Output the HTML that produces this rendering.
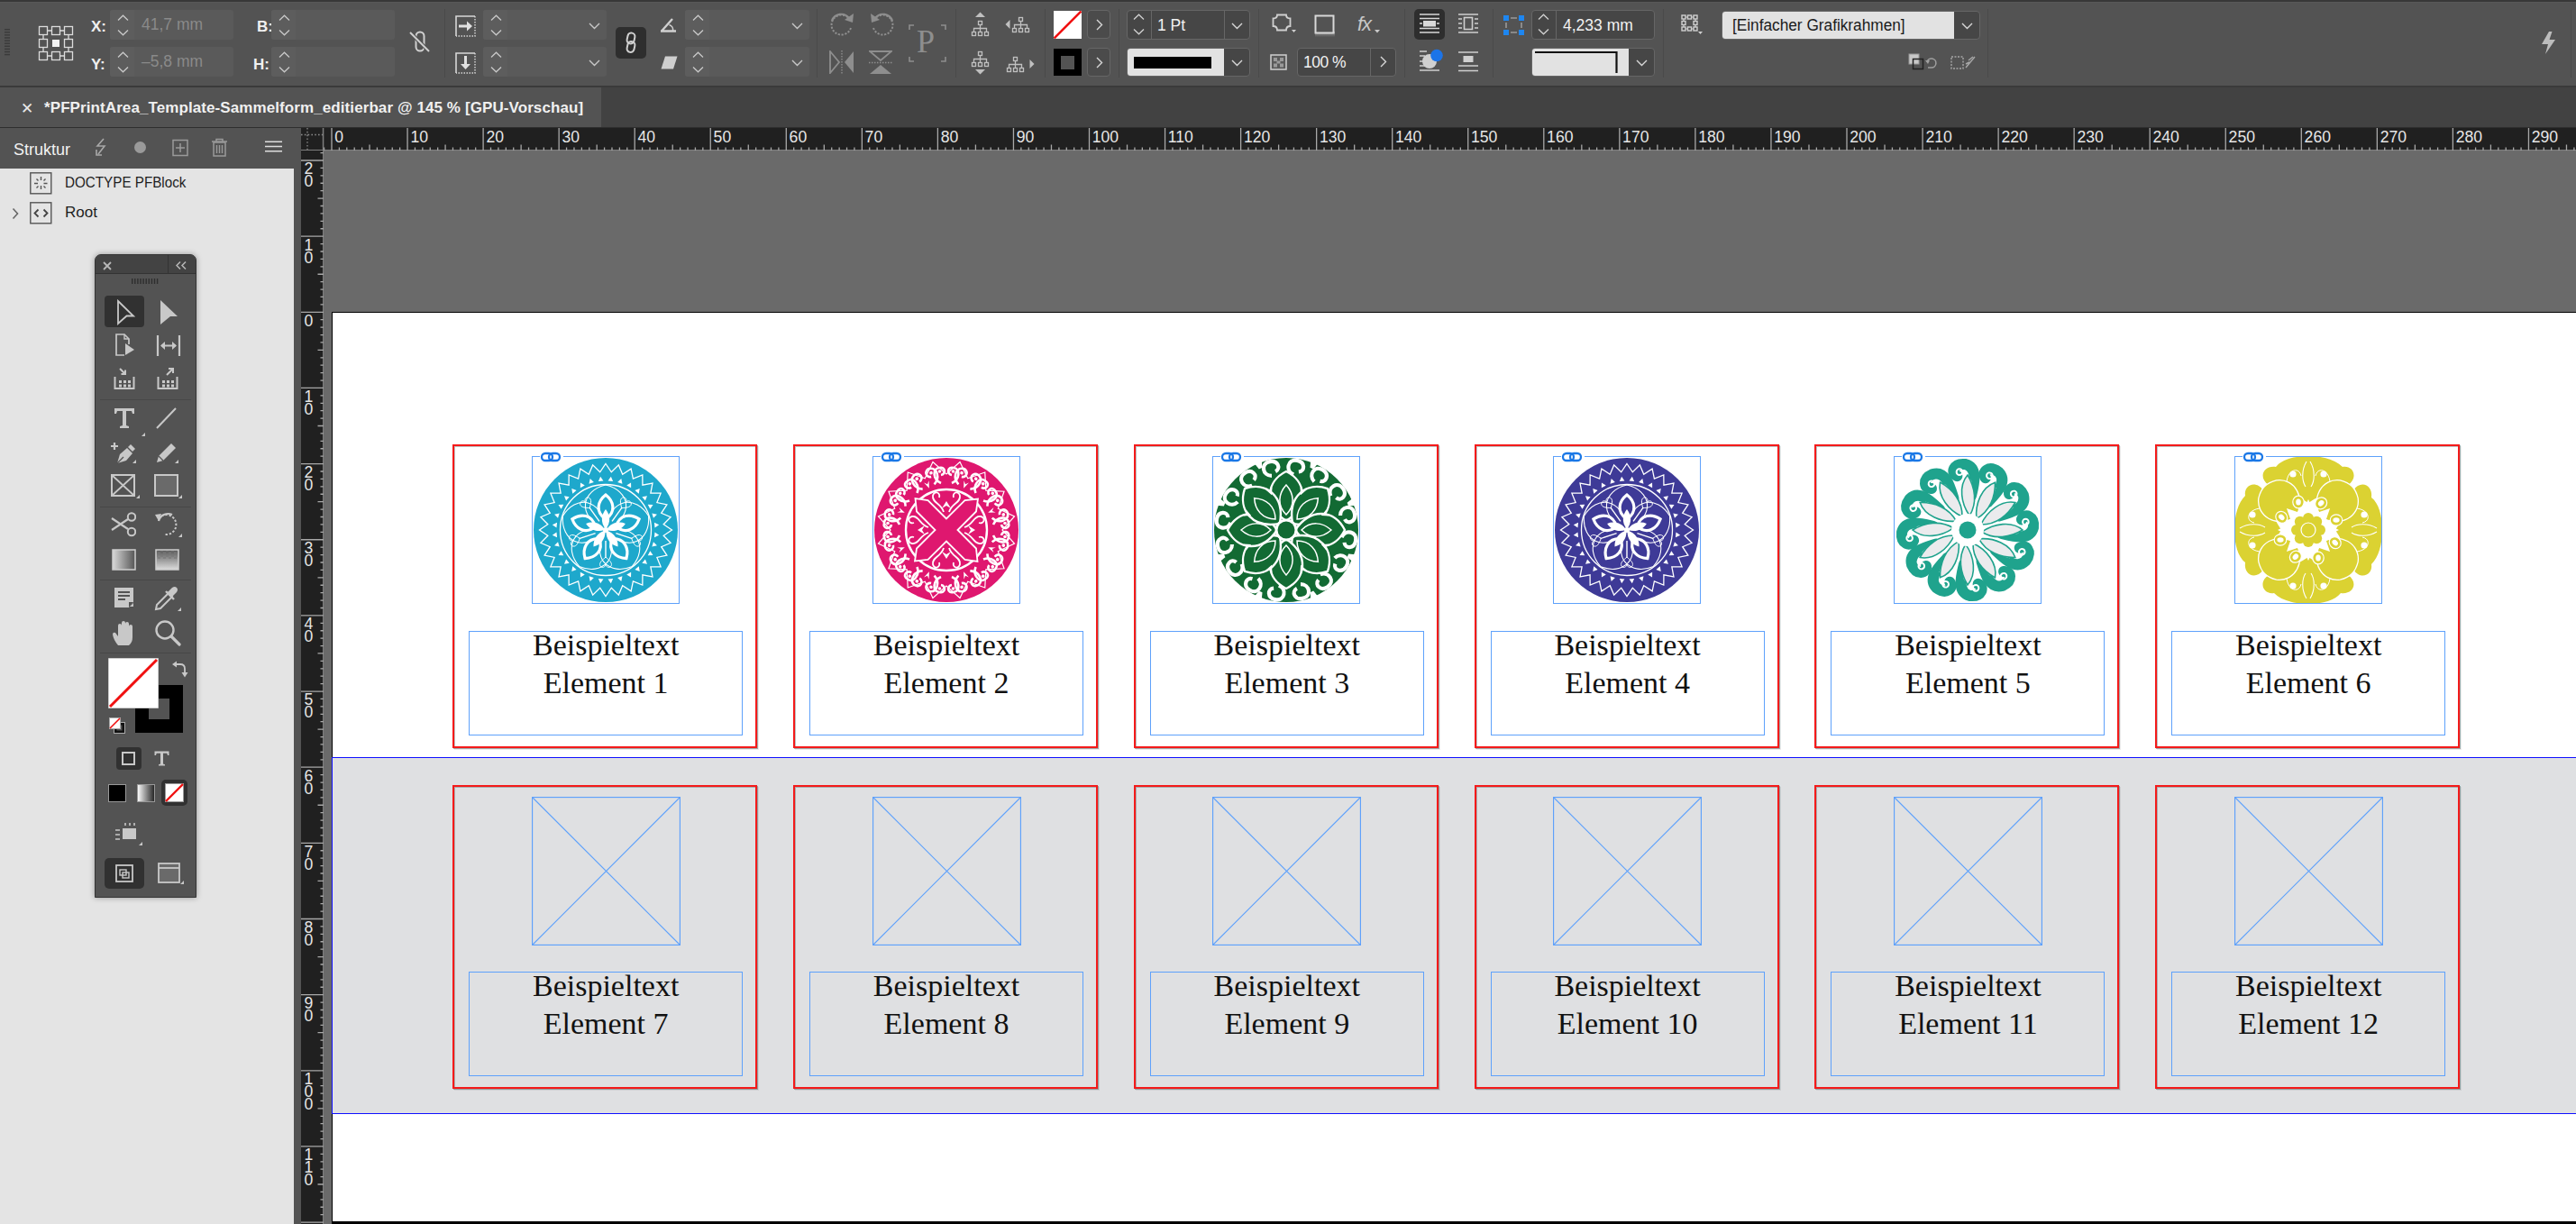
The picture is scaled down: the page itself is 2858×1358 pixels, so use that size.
<!DOCTYPE html><html><head><meta charset="utf-8"><style>
*{margin:0;padding:0;box-sizing:border-box}
html,body{width:2858px;height:1358px;overflow:hidden;background:#535353;font-family:"Liberation Sans",sans-serif}
.a{position:absolute}
.t{position:absolute;white-space:nowrap;line-height:1}
</style></head><body>

<div class="a" style="left:0;top:0;width:2858px;height:2px;background:#383838"></div>
<div class="a" style="left:0;top:2px;width:2858px;height:1px;background:#585858"></div>
<div class="a" style="left:0;top:95px;width:2858px;height:2px;background:#3a3a3a"></div>
<svg class="a" style="left:5px;top:32px" width="7" height="32" viewBox="0 0 7 32"><rect x="0" y="0.0" width="6" height="1.4" fill="#3a3a3a"/><rect x="0" y="3.1" width="6" height="1.4" fill="#3a3a3a"/><rect x="0" y="6.2" width="6" height="1.4" fill="#3a3a3a"/><rect x="0" y="9.3" width="6" height="1.4" fill="#3a3a3a"/><rect x="0" y="12.4" width="6" height="1.4" fill="#3a3a3a"/><rect x="0" y="15.5" width="6" height="1.4" fill="#3a3a3a"/><rect x="0" y="18.6" width="6" height="1.4" fill="#3a3a3a"/><rect x="0" y="21.7" width="6" height="1.4" fill="#3a3a3a"/><rect x="0" y="24.8" width="6" height="1.4" fill="#3a3a3a"/><rect x="0" y="27.9" width="6" height="1.4" fill="#3a3a3a"/></svg>
<svg class="a" style="left:42px;top:28px" width="41" height="41" viewBox="0 0 41 41"><rect x="1.5" y="1.5" width="9" height="9" fill="none" stroke="#dcdcdc" stroke-width="1.3"/><rect x="15.5" y="1.5" width="9" height="9" fill="none" stroke="#dcdcdc" stroke-width="1.3"/><rect x="29.5" y="1.5" width="9" height="9" fill="none" stroke="#dcdcdc" stroke-width="1.3"/><rect x="1.5" y="15.5" width="9" height="9" fill="none" stroke="#dcdcdc" stroke-width="1.3"/><rect x="16" y="16" width="8" height="8" fill="#f2f2f2"/><rect x="29.5" y="15.5" width="9" height="9" fill="none" stroke="#dcdcdc" stroke-width="1.3"/><rect x="1.5" y="29.5" width="9" height="9" fill="none" stroke="#dcdcdc" stroke-width="1.3"/><rect x="15.5" y="29.5" width="9" height="9" fill="none" stroke="#dcdcdc" stroke-width="1.3"/><rect x="29.5" y="29.5" width="9" height="9" fill="none" stroke="#dcdcdc" stroke-width="1.3"/><path d="M11 6 H15 M25 6 H29 M11 34 H15 M25 34 H29 M6 11 V15 M6 25 V29 M34 11 V15 M34 25 V29" stroke="#dcdcdc" stroke-width="1.3"/></svg>
<div class="t" style="left:101px;top:21px;font-size:17px;font-weight:bold;color:#f0f0f0">X:</div>
<div class="t" style="left:101px;top:63px;font-size:17px;font-weight:bold;color:#f0f0f0">Y:</div>
<div class="t" style="left:285px;top:21px;font-size:17px;font-weight:bold;color:#f0f0f0">B:</div>
<div class="t" style="left:281px;top:63px;font-size:17px;font-weight:bold;color:#f0f0f0">H:</div>
<div class="a" style="left:122px;top:11px;width:137px;height:33px;background:#5a5a5a;border-radius:3px"></div>
<div class="a" style="left:122px;top:11px;width:27px;height:33px;background:#5d5d5d;border-radius:3px 0 0 3px"></div>
<svg class="a" style="left:129.5px;top:15.5px" width="13" height="25" viewBox="0 0 13 25"><path d="M1 6.5 L6.5 1.2 L12 6.5 M1 17.5 L6.5 22.8 L12 17.5" fill="none" stroke="#c8c8c8" stroke-width="1.3"/></svg>
<div class="t" style="left:157px;top:19.4px;font-size:17.5px;color:#8a8a8a">41,7 mm</div>
<div class="a" style="left:122px;top:52px;width:137px;height:33px;background:#5a5a5a;border-radius:3px"></div>
<div class="a" style="left:122px;top:52px;width:27px;height:33px;background:#5d5d5d;border-radius:3px 0 0 3px"></div>
<svg class="a" style="left:129.5px;top:56.5px" width="13" height="25" viewBox="0 0 13 25"><path d="M1 6.5 L6.5 1.2 L12 6.5 M1 17.5 L6.5 22.8 L12 17.5" fill="none" stroke="#c8c8c8" stroke-width="1.3"/></svg>
<div class="t" style="left:157px;top:60.4px;font-size:17.5px;color:#8a8a8a">&#8211;5,8 mm</div>
<div class="a" style="left:301px;top:11px;width:137px;height:33px;background:#5a5a5a;border-radius:3px"></div>
<div class="a" style="left:301px;top:11px;width:27px;height:33px;background:#5d5d5d;border-radius:3px 0 0 3px"></div>
<svg class="a" style="left:308.5px;top:15.5px" width="13" height="25" viewBox="0 0 13 25"><path d="M1 6.5 L6.5 1.2 L12 6.5 M1 17.5 L6.5 22.8 L12 17.5" fill="none" stroke="#c8c8c8" stroke-width="1.3"/></svg>
<div class="a" style="left:301px;top:52px;width:137px;height:33px;background:#5a5a5a;border-radius:3px"></div>
<div class="a" style="left:301px;top:52px;width:27px;height:33px;background:#5d5d5d;border-radius:3px 0 0 3px"></div>
<svg class="a" style="left:308.5px;top:56.5px" width="13" height="25" viewBox="0 0 13 25"><path d="M1 6.5 L6.5 1.2 L12 6.5 M1 17.5 L6.5 22.8 L12 17.5" fill="none" stroke="#c8c8c8" stroke-width="1.3"/></svg>
<svg class="a" style="left:453px;top:33px" width="26" height="26" viewBox="0 0 26 26"><rect x="8.5" y="2.5" width="9" height="21" rx="4.5" fill="none" stroke="#d0d0d0" stroke-width="2"/><path d="M2 3 L23 24" stroke="#535353" stroke-width="4"/><path d="M2 3 L23 24" stroke="#d0d0d0" stroke-width="2"/></svg>
<div class="a" style="left:493px;top:10px;width:1px;height:76px;background:#4a4a4a"></div>
<svg class="a" style="left:505px;top:17px" width="24" height="24" viewBox="0 0 24 24"><path d="M1 23 V1 H22" fill="none" stroke="#d8d8d8" stroke-width="1.6"/><path d="M22 1 V23 H1" fill="none" stroke="#d8d8d8" stroke-width="1.4" stroke-dasharray="1.5 1.5"/><path d="M4 12 H15" stroke="#e0e0e0" stroke-width="3"/><path d="M13 6.5 L19 12 L13 17.5 Z" fill="#e0e0e0"/></svg>
<svg class="a" style="left:505px;top:58px" width="24" height="24" viewBox="0 0 24 24"><path d="M1 23 V1 H22" fill="none" stroke="#d8d8d8" stroke-width="1.6"/><path d="M22 1 V23 H1" fill="none" stroke="#d8d8d8" stroke-width="1.4" stroke-dasharray="1.5 1.5"/><path d="M11.5 4 V15" stroke="#e0e0e0" stroke-width="3"/><path d="M6 13 L11.5 19 L17 13 Z" fill="#e0e0e0"/></svg>
<div class="a" style="left:536px;top:11px;width:137px;height:33px;background:#5a5a5a;border-radius:3px"></div>
<div class="a" style="left:536px;top:11px;width:27px;height:33px;background:#5d5d5d;border-radius:3px 0 0 3px"></div>
<svg class="a" style="left:543.5px;top:15.5px" width="13" height="25" viewBox="0 0 13 25"><path d="M1 6.5 L6.5 1.2 L12 6.5 M1 17.5 L6.5 22.8 L12 17.5" fill="none" stroke="#c8c8c8" stroke-width="1.3"/></svg>
<svg class="a" style="left:653px;top:24.5px" width="13" height="8" viewBox="0 0 13 8"><path d="M1 1 L6.5 6.5 L12 1" fill="none" stroke="#c8c8c8" stroke-width="1.4"/></svg>
<div class="a" style="left:536px;top:52px;width:137px;height:33px;background:#5a5a5a;border-radius:3px"></div>
<div class="a" style="left:536px;top:52px;width:27px;height:33px;background:#5d5d5d;border-radius:3px 0 0 3px"></div>
<svg class="a" style="left:543.5px;top:56.5px" width="13" height="25" viewBox="0 0 13 25"><path d="M1 6.5 L6.5 1.2 L12 6.5 M1 17.5 L6.5 22.8 L12 17.5" fill="none" stroke="#c8c8c8" stroke-width="1.3"/></svg>
<svg class="a" style="left:653px;top:65.5px" width="13" height="8" viewBox="0 0 13 8"><path d="M1 1 L6.5 6.5 L12 1" fill="none" stroke="#c8c8c8" stroke-width="1.4"/></svg>
<div class="a" style="left:683px;top:30px;width:34px;height:35px;background:#2e2e2e;border-radius:5px"></div>
<svg class="a" style="left:691px;top:35px" width="18" height="25" viewBox="0 0 18 25"><rect x="5" y="1.5" width="8" height="12" rx="4" fill="none" stroke="#d0d0d0" stroke-width="2" transform="rotate(12 9 7.5)"/><rect x="5" y="11" width="8" height="12" rx="4" fill="none" stroke="#d0d0d0" stroke-width="2" transform="rotate(12 9 17)"/></svg>
<svg class="a" style="left:732px;top:19px" width="20" height="17" viewBox="0 0 20 17"><path d="M2 15.5 L14 2 M1 15.5 H18" stroke="#d0d0d0" stroke-width="2.4" fill="none"/><path d="M10.5 8.5 a6 6 0 0 1 4 7" stroke="#d0d0d0" stroke-width="1.6" fill="none"/></svg>
<svg class="a" style="left:733px;top:62px" width="19" height="15" viewBox="0 0 19 15"><path d="M5 0.5 H18.5 L14 14.5 H0.5 Z" fill="#cfcfcf"/></svg>
<div class="a" style="left:760px;top:11px;width:138px;height:33px;background:#5a5a5a;border-radius:3px"></div>
<div class="a" style="left:760px;top:11px;width:27px;height:33px;background:#5d5d5d;border-radius:3px 0 0 3px"></div>
<svg class="a" style="left:767.5px;top:15.5px" width="13" height="25" viewBox="0 0 13 25"><path d="M1 6.5 L6.5 1.2 L12 6.5 M1 17.5 L6.5 22.8 L12 17.5" fill="none" stroke="#c8c8c8" stroke-width="1.3"/></svg>
<svg class="a" style="left:878px;top:24.5px" width="13" height="8" viewBox="0 0 13 8"><path d="M1 1 L6.5 6.5 L12 1" fill="none" stroke="#c8c8c8" stroke-width="1.4"/></svg>
<div class="a" style="left:760px;top:52px;width:138px;height:33px;background:#5a5a5a;border-radius:3px"></div>
<div class="a" style="left:760px;top:52px;width:27px;height:33px;background:#5d5d5d;border-radius:3px 0 0 3px"></div>
<svg class="a" style="left:767.5px;top:56.5px" width="13" height="25" viewBox="0 0 13 25"><path d="M1 6.5 L6.5 1.2 L12 6.5 M1 17.5 L6.5 22.8 L12 17.5" fill="none" stroke="#c8c8c8" stroke-width="1.3"/></svg>
<svg class="a" style="left:878px;top:65.5px" width="13" height="8" viewBox="0 0 13 8"><path d="M1 1 L6.5 6.5 L12 1" fill="none" stroke="#c8c8c8" stroke-width="1.4"/></svg>
<div class="a" style="left:906px;top:10px;width:1px;height:76px;background:#4a4a4a"></div>
<svg class="a" style="left:920px;top:13px" width="29" height="28" viewBox="0 0 29 28"><path d="M23 9 A11 11 0 1 0 24 18" fill="none" stroke="#8e8e8e" stroke-width="2" stroke-dasharray="2.2 1.6"/><path d="M3 10 A11 11 0 0 1 22 7" fill="none" stroke="#8e8e8e" stroke-width="2.2"/><path d="M17 9 L27 2 L26 12 Z" fill="#8e8e8e"/></svg>
<svg class="a" style="left:964px;top:13px" width="29" height="28" viewBox="0 0 29 28" style="transform:scaleX(-1)"><g transform="translate(29 0) scale(-1 1)"><path d="M23 9 A11 11 0 1 0 24 18" fill="none" stroke="#8e8e8e" stroke-width="2" stroke-dasharray="2.2 1.6"/><path d="M3 10 A11 11 0 0 1 22 7" fill="none" stroke="#8e8e8e" stroke-width="2.2"/><path d="M17 9 L27 2 L26 12 Z" fill="#8e8e8e"/></g></svg>
<svg class="a" style="left:920px;top:56px" width="28" height="26" viewBox="0 0 28 26"><path d="M1 1 L11 13 L1 25 Z" fill="none" stroke="#8e8e8e" stroke-width="1.8"/><path d="M27 1 L17 13 L27 25 Z" fill="#8e8e8e"/><path d="M14 0 V26" stroke="#8e8e8e" stroke-width="1.4" stroke-dasharray="1.5 1.5"/></svg>
<svg class="a" style="left:964px;top:56px" width="26" height="27" viewBox="0 0 26 27"><path d="M1 1 H25 L13 11 Z" fill="none" stroke="#8e8e8e" stroke-width="1.8"/><path d="M1 26 H25 L13 16 Z" fill="#8e8e8e"/><path d="M0 13.5 H26" stroke="#8e8e8e" stroke-width="1.4" stroke-dasharray="1.5 1.5"/></svg>
<svg class="a" style="left:1008px;top:27px" width="42" height="42" viewBox="0 0 42 42"><path d="M1 6 V1 H6 M36 1 H41 V6 M41 36 V41 H36 M6 41 H1 V36" fill="none" stroke="#8e8e8e" stroke-width="1.6"/></svg>
<div class="t" style="left:1017px;top:28px;font-family:'Liberation Serif',serif;font-size:36px;color:#8e8e8e">P</div>
<div class="a" style="left:1060px;top:10px;width:1px;height:76px;background:#4a4a4a"></div>
<svg class="a" style="left:1077px;top:13px" width="32" height="28" viewBox="0 0 32 28"><g fill="none" stroke="#c0c0c0" stroke-width="1.3"><rect x="8.5" y="10.5" width="4" height="4"/><rect x="1.5" y="22.5" width="4" height="4"/><rect x="8.5" y="22.5" width="4" height="4"/><rect x="15.5" y="22.5" width="4" height="4"/><path d="M10.5 14.5 V18.5 M3.5 22.5 V18.5 H17.5 V22.5 M10.5 18.5 V22.5"/></g><path d="M5 6 L10.5 0.5 L16 6 Z" fill="#c0c0c0"/></svg>
<svg class="a" style="left:1115px;top:14px" width="32" height="28" viewBox="0 0 32 28"><g fill="none" stroke="#c0c0c0" stroke-width="1.3"><rect x="15.5" y="5.5" width="4" height="4"/><rect x="8.5" y="17.5" width="4" height="4"/><rect x="15.5" y="17.5" width="4" height="4"/><rect x="22.5" y="17.5" width="4" height="4"/><path d="M17.5 9.5 V13.5 M10.5 17.5 V13.5 H24.5 V17.5 M17.5 13.5 V17.5"/></g><path d="M5.5 8 L0.5 13 L5.5 18 Z" fill="#c0c0c0"/></svg>
<svg class="a" style="left:1077px;top:56px" width="32" height="28" viewBox="0 0 32 28"><g fill="none" stroke="#c0c0c0" stroke-width="1.3"><rect x="8.5" y="1.5" width="4" height="4"/><rect x="1.5" y="13.5" width="4" height="4"/><rect x="8.5" y="13.5" width="4" height="4"/><rect x="15.5" y="13.5" width="4" height="4"/><path d="M10.5 5.5 V9.5 M3.5 13.5 V9.5 H17.5 V13.5 M10.5 9.5 V13.5"/></g><path d="M5 21 L10.5 26.5 L16 21 Z" fill="#c0c0c0"/></svg>
<svg class="a" style="left:1116px;top:58px" width="32" height="28" viewBox="0 0 32 28"><g fill="none" stroke="#c0c0c0" stroke-width="1.3"><rect x="8.5" y="5.5" width="4" height="4"/><rect x="1.5" y="17.5" width="4" height="4"/><rect x="8.5" y="17.5" width="4" height="4"/><rect x="15.5" y="17.5" width="4" height="4"/><path d="M10.5 9.5 V13.5 M3.5 17.5 V13.5 H17.5 V17.5 M10.5 13.5 V17.5"/></g><path d="M26.5 8 L31.5 13 L26.5 18 Z" fill="#c0c0c0"/></svg>
<div class="a" style="left:1159px;top:10px;width:1px;height:76px;background:#4a4a4a"></div>
<svg class="a" style="left:1169px;top:12px" width="31" height="31" viewBox="0 0 31 31"><rect x="0" y="0" width="31" height="31" fill="#fff"/><path d="M0.5 30.5 L30.5 0.5" stroke="#f01010" stroke-width="2.6"/></svg>
<div class="a" style="left:1206px;top:11px;width:26px;height:32px;background:#4b4b4b;border:1px solid #666;border-radius:4px"></div>
<svg class="a" style="left:1216px;top:21px" width="8" height="13" viewBox="0 0 8 13"><path d="M1 1 L6.5 6.5 L1 12" fill="none" stroke="#d8d8d8" stroke-width="1.4"/></svg>
<div class="a" style="left:1169px;top:54px;width:31px;height:30px;background:#000"></div>
<div class="a" style="left:1177px;top:62px;width:15px;height:15px;background:#535353"></div>
<div class="a" style="left:1206px;top:53px;width:26px;height:32px;background:#4b4b4b;border:1px solid #666;border-radius:4px"></div>
<svg class="a" style="left:1216px;top:63px" width="8" height="13" viewBox="0 0 8 13"><path d="M1 1 L6.5 6.5 L1 12" fill="none" stroke="#d8d8d8" stroke-width="1.4"/></svg>
<div class="a" style="left:1241px;top:10px;width:1px;height:76px;background:#4a4a4a"></div>
<div class="a" style="left:1250px;top:11px;width:137px;height:33px;background:#464646;border:1px solid #666;border-radius:4px"></div>
<div class="a" style="left:1277px;top:12px;width:1px;height:31px;background:#666"></div>
<div class="a" style="left:1358px;top:12px;width:1px;height:31px;background:#666"></div>
<svg class="a" style="left:1257px;top:15px" width="13" height="25" viewBox="0 0 13 25"><path d="M1 6.5 L6.5 1.2 L12 6.5 M1 17.5 L6.5 22.8 L12 17.5" fill="none" stroke="#d0d0d0" stroke-width="1.3"/></svg>
<div class="t" style="left:1284px;top:19.5px;font-size:17.5px;color:#f2f2f2">1 Pt</div>
<svg class="a" style="left:1366px;top:25px" width="13" height="8" viewBox="0 0 13 8"><path d="M1 1 L6.5 6.5 L12 1" fill="none" stroke="#d8d8d8" stroke-width="1.4"/></svg>
<div class="a" style="left:1250px;top:53px;width:137px;height:32px;background:#464646;border:1px solid #666;border-radius:4px"></div>
<div class="a" style="left:1251px;top:54px;width:107px;height:30px;background:#e2e2e2;border-radius:3px 0 0 3px"></div>
<div class="a" style="left:1258px;top:63px;width:86px;height:13px;background:#000"></div>
<svg class="a" style="left:1366px;top:66px" width="13" height="8" viewBox="0 0 13 8"><path d="M1 1 L6.5 6.5 L12 1" fill="none" stroke="#d8d8d8" stroke-width="1.4"/></svg>
<div class="a" style="left:1396px;top:10px;width:1px;height:76px;background:#4a4a4a"></div>
<svg class="a" style="left:1411px;top:15px" width="28" height="23" viewBox="0 0 28 23"><path d="M6 1.5 H16 Q16 5.5 20.5 5.5 V14 Q16 14 16 18.5 H6 Q6 14 1.5 14 V5.5 Q6 5.5 6 1.5 Z" fill="none" stroke="#d0d0d0" stroke-width="1.8"/><path d="M22 18 H27 L24.5 21 Z" fill="#d0d0d0"/></svg>
<svg class="a" style="left:1458px;top:16px" width="24" height="26" viewBox="0 0 24 26"><defs><linearGradient id="sh" x1="0" y1="0" x2="0" y2="1"><stop offset="0" stop-color="#9a9a9a"/><stop offset="1" stop-color="#555"/></linearGradient></defs><rect x="1" y="19" width="22" height="6" fill="url(#sh)"/><rect x="1.5" y="1.5" width="20" height="19" fill="#535353" stroke="#d8d8d8" stroke-width="2"/></svg>
<div class="t" style="left:1506px;top:16px;font-size:22px;font-style:italic;color:#c8c8c8;letter-spacing:-1px">fx</div>
<svg class="a" style="left:1525px;top:33px" width="6" height="4" viewBox="0 0 6 4"><path d="M0 0 H6 L3 3.5 Z" fill="#c8c8c8"/></svg>
<svg class="a" style="left:1409px;top:60px" width="19" height="18" viewBox="0 0 19 18"><rect x="1" y="1" width="17" height="16" fill="#5a5a5a" stroke="#cfcfcf" stroke-width="1.5"/><rect x="4" y="4" width="4" height="4" fill="#9a9a9a"/><rect x="11" y="4" width="4" height="4" fill="#9a9a9a"/><rect x="7.5" y="7.5" width="4" height="3" fill="#9a9a9a"/><rect x="4" y="10.5" width="4" height="4" fill="#9a9a9a"/><rect x="11" y="10.5" width="4" height="4" fill="#9a9a9a"/></svg>
<div class="a" style="left:1439px;top:53px;width:110px;height:32px;background:#464646;border:1px solid #666;border-radius:4px"></div>
<div class="a" style="left:1520px;top:54px;width:1px;height:30px;background:#666"></div>
<div class="t" style="left:1446px;top:60.5px;font-size:17.5px;color:#f2f2f2;letter-spacing:-0.5px">100 %</div>
<svg class="a" style="left:1531px;top:62px" width="8" height="13" viewBox="0 0 8 13"><path d="M1 1 L6.5 6.5 L1 12" fill="none" stroke="#d8d8d8" stroke-width="1.4"/></svg>
<div class="a" style="left:1558px;top:10px;width:1px;height:76px;background:#4a4a4a"></div>
<div class="a" style="left:1569px;top:10px;width:34px;height:34px;background:#2e2e2e;border-radius:5px"></div>
<svg class="a" style="left:1574px;top:15px" width="24" height="22" viewBox="0 0 24 22"><path d="M1 1 H23 M1 5.5 H23 M1 16.5 H23 M1 21 H23" stroke="#d8d8d8" stroke-width="1.5"/><rect x="5" y="8" width="14" height="6.5" fill="#d8d8d8"/><path d="M1 11 H4 M20 11 H23" stroke="#d8d8d8" stroke-width="1.5"/></svg>
<svg class="a" style="left:1617px;top:15px" width="24" height="22" viewBox="0 0 24 22"><path d="M1 1 H23 M1 21 H23 M1 6 H5 M1 11 H5 M1 16 H5 M19 6 H23 M19 11 H23 M19 16 H23" stroke="#d0d0d0" stroke-width="1.5"/><rect x="7.5" y="4.5" width="9" height="13" fill="none" stroke="#d0d0d0" stroke-width="1.6"/></svg>
<svg class="a" style="left:1574px;top:54px" width="30" height="26" viewBox="0 0 30 26"><path d="M1 3 H9 M1 8 H7 M1 14 H7 M1 19 H9 M1 24 H23" stroke="#d0d0d0" stroke-width="1.5"/><circle cx="12" cy="14" r="8" fill="#d0d0d0"/><circle cx="20" cy="7.5" r="6.8" fill="#1c74e8"/></svg>
<svg class="a" style="left:1617px;top:57px" width="24" height="23" viewBox="0 0 24 23"><path d="M1 1 H23 M1 16 H23 M1 21.5 H23" stroke="#d0d0d0" stroke-width="1.5"/><rect x="6.5" y="5" width="11" height="7" fill="#d0d0d0"/></svg>
<div class="a" style="left:1656px;top:10px;width:1px;height:76px;background:#4a4a4a"></div>
<svg class="a" style="left:1667px;top:16px" width="25" height="24" viewBox="0 0 25 24"><rect x="1" y="1" width="6" height="6" fill="#1e86f0"/><rect x="18" y="1" width="6" height="6" fill="#1e86f0"/><rect x="1" y="17" width="6" height="6" fill="#1e86f0"/><rect x="18" y="17" width="6" height="6" fill="#1e86f0"/><path d="M9 4 H16 M9 20 H16 M4 9 V15 M21 9 V15" stroke="#9a9a9a" stroke-width="1.6"/></svg>
<div class="a" style="left:1699px;top:11px;width:137px;height:33px;background:#464646;border:1px solid #666;border-radius:4px"></div>
<div class="a" style="left:1726px;top:12px;width:1px;height:31px;background:#666"></div>
<svg class="a" style="left:1706px;top:15px" width="13" height="25" viewBox="0 0 13 25"><path d="M1 6.5 L6.5 1.2 L12 6.5 M1 17.5 L6.5 22.8 L12 17.5" fill="none" stroke="#d0d0d0" stroke-width="1.3"/></svg>
<div class="t" style="left:1734px;top:19.5px;font-size:17.5px;color:#f2f2f2">4,233 mm</div>
<div class="a" style="left:1699px;top:53px;width:137px;height:32px;background:#464646;border:1px solid #666;border-radius:4px"></div>
<div class="a" style="left:1700px;top:54px;width:107px;height:30px;background:#e2e2e2;border-radius:3px 0 0 3px"></div>
<svg class="a" style="left:1702px;top:56px" width="94" height="26" viewBox="0 0 94 26"><path d="M1 2 H91.5 V25" fill="none" stroke="#111" stroke-width="2.2"/></svg>
<svg class="a" style="left:1815px;top:66px" width="13" height="8" viewBox="0 0 13 8"><path d="M1 1 L6.5 6.5 L12 1" fill="none" stroke="#d8d8d8" stroke-width="1.4"/></svg>
<div class="a" style="left:1845px;top:10px;width:1px;height:76px;background:#4a4a4a"></div>
<svg class="a" style="left:1865px;top:16px" width="26" height="23" viewBox="0 0 26 23"><g fill="none" stroke="#d0d0d0" stroke-width="1.4"><rect x="1" y="1" width="4" height="4"/><rect x="7.5" y="1" width="4" height="4"/><rect x="14" y="1" width="4" height="4"/><rect x="1" y="7.5" width="4" height="4"/><rect x="14" y="7.5" width="4" height="4"/><rect x="1" y="14" width="4" height="4"/><rect x="7.5" y="14" width="4" height="4"/><rect x="14" y="14" width="4" height="4"/></g><path d="M5 3 H7.5 M11.5 3 H14 M5 16 H7.5 M11.5 16 H14 M3 5 V7.5 M3 11.5 V14 M16 5 V7.5 M16 11.5 V14" stroke="#d0d0d0" stroke-width="1.2"/><path d="M19 19 H24 L21.5 22 Z" fill="#d0d0d0"/></svg>
<div class="a" style="left:1910px;top:12px;width:287px;height:32px;background:#464646;border:1px solid #666;border-radius:4px"></div>
<div class="a" style="left:1911px;top:13px;width:257px;height:30px;background:#e2e2e2;border-radius:3px 0 0 3px"></div>
<div class="t" style="left:1922px;top:20px;font-size:17.5px;color:#1a1a1a;transform:scaleX(0.985);transform-origin:left">[Einfacher Grafikrahmen]</div>
<svg class="a" style="left:2176px;top:25px" width="13" height="8" viewBox="0 0 13 8"><path d="M1 1 L6.5 6.5 L12 1" fill="none" stroke="#d8d8d8" stroke-width="1.4"/></svg>
<svg class="a" style="left:2117px;top:59px" width="33" height="20" viewBox="0 0 33 20"><rect x="1" y="1" width="11" height="11" fill="#c8c8c8" stroke="#9a9a9a"/><rect x="5.5" y="6.5" width="11" height="11" fill="none" stroke="#222" stroke-width="1.5"/><path d="M21 10 a5 5 0 1 1 5 6 H22" fill="none" stroke="#a0a0a0" stroke-width="1.5"/><path d="M19 8 L22 12 L24 8 Z" fill="#a0a0a0"/></svg>
<svg class="a" style="left:2164px;top:59px" width="29" height="20" viewBox="0 0 29 20"><rect x="1" y="4" width="13" height="13" fill="none" stroke="#a8a8a8" stroke-width="1.4" stroke-dasharray="2 1.5"/><path d="M17 16 L27 4 M20 8 L25 4 M17 12 L21 10" stroke="#a8a8a8" stroke-width="1.4"/></svg>
<div class="a" style="left:2205px;top:10px;width:1px;height:76px;background:#4a4a4a"></div>
<svg class="a" style="left:2819px;top:35px" width="18" height="26" viewBox="0 0 18 26"><path d="M9 0 L1 14 H8 L5 25 L16 9 H9.5 L12.5 0 Z" fill="#bdbdbd"/></svg>
<div class="a" style="left:2852px;top:11px;width:1px;height:75px;background:#4a4a4a"></div>
<div class="a" style="left:0;top:97px;width:2858px;height:44px;background:#424242"></div>
<div class="a" style="left:0;top:97px;width:667px;height:44px;background:#535353"></div>
<div class="a" style="left:0;top:141px;width:2858px;height:1px;background:#2e2e2e"></div>
<div class="t" style="left:23px;top:112px;font-size:17px;color:#e8e8e8">&#x2715;</div>
<div class="t" style="left:49px;top:111px;font-size:17px;font-weight:bold;color:#f0f0f0;letter-spacing:0.09px">*PFPrintArea_Template-Sammelform_editierbar @ 145 % [GPU-Vorschau]</div>
<div class="a" style="left:0;top:142px;width:334px;height:1216px;background:#535353"></div>
<div class="a" style="left:0;top:187px;width:326px;height:1171px;background:#e4e4e4"></div>
<div class="t" style="left:15px;top:156.5px;font-size:18px;color:#f2f2f2">Struktur</div>
<div class="t" style="left:72px;top:194px;font-size:17px;color:#1e1e1e;transform:scaleX(0.895);transform-origin:left">DOCTYPE PFBlock</div>
<div class="t" style="left:72px;top:226.5px;font-size:17px;color:#1e1e1e">Root</div>
<svg class="a" style="left:334px;top:142px" width="2524" height="27" viewBox="0 0 2524 27"><rect x="0" y="0" width="2524" height="25" fill="#202020"/><rect x="0" y="24" width="2524" height="1.6" fill="#7e7e7e"/><path d="M25.60 21.5 V25 M34.00 0 V25 M42.40 21.5 V25 M50.81 21.5 V25 M59.21 21.5 V25 M67.62 21.5 V25 M76.02 18.5 V25 M84.43 21.5 V25 M92.83 21.5 V25 M101.24 21.5 V25 M109.64 21.5 V25 M118.05 0 V25 M126.45 21.5 V25 M134.86 21.5 V25 M143.26 21.5 V25 M151.67 21.5 V25 M160.07 18.5 V25 M168.48 21.5 V25 M176.88 21.5 V25 M185.29 21.5 V25 M193.69 21.5 V25 M202.10 0 V25 M210.50 21.5 V25 M218.91 21.5 V25 M227.32 21.5 V25 M235.72 21.5 V25 M244.12 18.5 V25 M252.53 21.5 V25 M260.93 21.5 V25 M269.34 21.5 V25 M277.75 21.5 V25 M286.15 0 V25 M294.56 21.5 V25 M302.96 21.5 V25 M311.37 21.5 V25 M319.77 21.5 V25 M328.17 18.5 V25 M336.58 21.5 V25 M344.98 21.5 V25 M353.39 21.5 V25 M361.79 21.5 V25 M370.20 0 V25 M378.61 21.5 V25 M387.01 21.5 V25 M395.41 21.5 V25 M403.82 21.5 V25 M412.22 18.5 V25 M420.63 21.5 V25 M429.03 21.5 V25 M437.44 21.5 V25 M445.85 21.5 V25 M454.25 0 V25 M462.65 21.5 V25 M471.06 21.5 V25 M479.46 21.5 V25 M487.87 21.5 V25 M496.27 18.5 V25 M504.68 21.5 V25 M513.09 21.5 V25 M521.49 21.5 V25 M529.89 21.5 V25 M538.30 0 V25 M546.70 21.5 V25 M555.11 21.5 V25 M563.51 21.5 V25 M571.92 21.5 V25 M580.32 18.5 V25 M588.73 21.5 V25 M597.13 21.5 V25 M605.54 21.5 V25 M613.94 21.5 V25 M622.35 0 V25 M630.75 21.5 V25 M639.16 21.5 V25 M647.56 21.5 V25 M655.97 21.5 V25 M664.38 18.5 V25 M672.78 21.5 V25 M681.18 21.5 V25 M689.59 21.5 V25 M697.99 21.5 V25 M706.40 0 V25 M714.80 21.5 V25 M723.21 21.5 V25 M731.61 21.5 V25 M740.02 21.5 V25 M748.42 18.5 V25 M756.83 21.5 V25 M765.23 21.5 V25 M773.64 21.5 V25 M782.05 21.5 V25 M790.45 0 V25 M798.86 21.5 V25 M807.26 21.5 V25 M815.66 21.5 V25 M824.07 21.5 V25 M832.47 18.5 V25 M840.88 21.5 V25 M849.28 21.5 V25 M857.69 21.5 V25 M866.09 21.5 V25 M874.50 0 V25 M882.90 21.5 V25 M891.31 21.5 V25 M899.71 21.5 V25 M908.12 21.5 V25 M916.53 18.5 V25 M924.93 21.5 V25 M933.34 21.5 V25 M941.74 21.5 V25 M950.14 21.5 V25 M958.55 0 V25 M966.95 21.5 V25 M975.36 21.5 V25 M983.76 21.5 V25 M992.17 21.5 V25 M1000.57 18.5 V25 M1008.98 21.5 V25 M1017.38 21.5 V25 M1025.79 21.5 V25 M1034.19 21.5 V25 M1042.60 0 V25 M1051.00 21.5 V25 M1059.41 21.5 V25 M1067.81 21.5 V25 M1076.22 21.5 V25 M1084.62 18.5 V25 M1093.03 21.5 V25 M1101.43 21.5 V25 M1109.84 21.5 V25 M1118.24 21.5 V25 M1126.65 0 V25 M1135.05 21.5 V25 M1143.46 21.5 V25 M1151.87 21.5 V25 M1160.27 21.5 V25 M1168.67 18.5 V25 M1177.08 21.5 V25 M1185.48 21.5 V25 M1193.89 21.5 V25 M1202.29 21.5 V25 M1210.70 0 V25 M1219.11 21.5 V25 M1227.51 21.5 V25 M1235.91 21.5 V25 M1244.32 21.5 V25 M1252.72 18.5 V25 M1261.13 21.5 V25 M1269.53 21.5 V25 M1277.94 21.5 V25 M1286.34 21.5 V25 M1294.75 0 V25 M1303.15 21.5 V25 M1311.56 21.5 V25 M1319.96 21.5 V25 M1328.37 21.5 V25 M1336.77 18.5 V25 M1345.18 21.5 V25 M1353.58 21.5 V25 M1361.99 21.5 V25 M1370.39 21.5 V25 M1378.80 0 V25 M1387.20 21.5 V25 M1395.61 21.5 V25 M1404.01 21.5 V25 M1412.42 21.5 V25 M1420.82 18.5 V25 M1429.23 21.5 V25 M1437.63 21.5 V25 M1446.04 21.5 V25 M1454.44 21.5 V25 M1462.85 0 V25 M1471.25 21.5 V25 M1479.66 21.5 V25 M1488.06 21.5 V25 M1496.47 21.5 V25 M1504.88 18.5 V25 M1513.28 21.5 V25 M1521.68 21.5 V25 M1530.09 21.5 V25 M1538.49 21.5 V25 M1546.90 0 V25 M1555.30 21.5 V25 M1563.71 21.5 V25 M1572.11 21.5 V25 M1580.52 21.5 V25 M1588.92 18.5 V25 M1597.33 21.5 V25 M1605.73 21.5 V25 M1614.14 21.5 V25 M1622.54 21.5 V25 M1630.95 0 V25 M1639.35 21.5 V25 M1647.76 21.5 V25 M1656.16 21.5 V25 M1664.57 21.5 V25 M1672.97 18.5 V25 M1681.38 21.5 V25 M1689.78 21.5 V25 M1698.19 21.5 V25 M1706.59 21.5 V25 M1715.00 0 V25 M1723.40 21.5 V25 M1731.81 21.5 V25 M1740.22 21.5 V25 M1748.62 21.5 V25 M1757.02 18.5 V25 M1765.43 21.5 V25 M1773.84 21.5 V25 M1782.24 21.5 V25 M1790.64 21.5 V25 M1799.05 0 V25 M1807.45 21.5 V25 M1815.86 21.5 V25 M1824.26 21.5 V25 M1832.67 21.5 V25 M1841.07 18.5 V25 M1849.48 21.5 V25 M1857.88 21.5 V25 M1866.29 21.5 V25 M1874.69 21.5 V25 M1883.10 0 V25 M1891.51 21.5 V25 M1899.91 21.5 V25 M1908.31 21.5 V25 M1916.72 21.5 V25 M1925.12 18.5 V25 M1933.53 21.5 V25 M1941.93 21.5 V25 M1950.34 21.5 V25 M1958.74 21.5 V25 M1967.15 0 V25 M1975.55 21.5 V25 M1983.96 21.5 V25 M1992.36 21.5 V25 M2000.77 21.5 V25 M2009.18 18.5 V25 M2017.58 21.5 V25 M2025.98 21.5 V25 M2034.39 21.5 V25 M2042.80 21.5 V25 M2051.20 0 V25 M2059.60 21.5 V25 M2068.01 21.5 V25 M2076.41 21.5 V25 M2084.82 21.5 V25 M2093.22 18.5 V25 M2101.63 21.5 V25 M2110.03 21.5 V25 M2118.44 21.5 V25 M2126.84 21.5 V25 M2135.25 0 V25 M2143.65 21.5 V25 M2152.06 21.5 V25 M2160.46 21.5 V25 M2168.87 21.5 V25 M2177.27 18.5 V25 M2185.68 21.5 V25 M2194.09 21.5 V25 M2202.49 21.5 V25 M2210.89 21.5 V25 M2219.30 0 V25 M2227.70 21.5 V25 M2236.11 21.5 V25 M2244.51 21.5 V25 M2252.92 21.5 V25 M2261.32 18.5 V25 M2269.73 21.5 V25 M2278.13 21.5 V25 M2286.54 21.5 V25 M2294.94 21.5 V25 M2303.35 0 V25 M2311.75 21.5 V25 M2320.16 21.5 V25 M2328.56 21.5 V25 M2336.97 21.5 V25 M2345.38 18.5 V25 M2353.78 21.5 V25 M2362.18 21.5 V25 M2370.59 21.5 V25 M2378.99 21.5 V25 M2387.40 0 V25 M2395.80 21.5 V25 M2404.21 21.5 V25 M2412.61 21.5 V25 M2421.02 21.5 V25 M2429.42 18.5 V25 M2437.83 21.5 V25 M2446.23 21.5 V25 M2454.64 21.5 V25 M2463.04 21.5 V25 M2471.45 0 V25 M2479.86 21.5 V25 M2488.26 21.5 V25 M2496.66 21.5 V25 M2505.07 21.5 V25 M2513.47 18.5 V25 M2521.88 21.5 V25" stroke="#a8a8a8" stroke-width="1.3"/><text x="37.3" y="16.4" font-family="Liberation Sans" font-size="17.6" fill="#e6e6e6">0</text><text x="121.4" y="16.4" font-family="Liberation Sans" font-size="17.6" fill="#e6e6e6">10</text><text x="205.4" y="16.4" font-family="Liberation Sans" font-size="17.6" fill="#e6e6e6">20</text><text x="289.4" y="16.4" font-family="Liberation Sans" font-size="17.6" fill="#e6e6e6">30</text><text x="373.5" y="16.4" font-family="Liberation Sans" font-size="17.6" fill="#e6e6e6">40</text><text x="457.6" y="16.4" font-family="Liberation Sans" font-size="17.6" fill="#e6e6e6">50</text><text x="541.6" y="16.4" font-family="Liberation Sans" font-size="17.6" fill="#e6e6e6">60</text><text x="625.6" y="16.4" font-family="Liberation Sans" font-size="17.6" fill="#e6e6e6">70</text><text x="709.7" y="16.4" font-family="Liberation Sans" font-size="17.6" fill="#e6e6e6">80</text><text x="793.7" y="16.4" font-family="Liberation Sans" font-size="17.6" fill="#e6e6e6">90</text><text x="877.8" y="16.4" font-family="Liberation Sans" font-size="17.6" fill="#e6e6e6">100</text><text x="961.8" y="16.4" font-family="Liberation Sans" font-size="17.6" fill="#e6e6e6">110</text><text x="1045.9" y="16.4" font-family="Liberation Sans" font-size="17.6" fill="#e6e6e6">120</text><text x="1129.9" y="16.4" font-family="Liberation Sans" font-size="17.6" fill="#e6e6e6">130</text><text x="1214.0" y="16.4" font-family="Liberation Sans" font-size="17.6" fill="#e6e6e6">140</text><text x="1298.0" y="16.4" font-family="Liberation Sans" font-size="17.6" fill="#e6e6e6">150</text><text x="1382.1" y="16.4" font-family="Liberation Sans" font-size="17.6" fill="#e6e6e6">160</text><text x="1466.1" y="16.4" font-family="Liberation Sans" font-size="17.6" fill="#e6e6e6">170</text><text x="1550.2" y="16.4" font-family="Liberation Sans" font-size="17.6" fill="#e6e6e6">180</text><text x="1634.2" y="16.4" font-family="Liberation Sans" font-size="17.6" fill="#e6e6e6">190</text><text x="1718.3" y="16.4" font-family="Liberation Sans" font-size="17.6" fill="#e6e6e6">200</text><text x="1802.4" y="16.4" font-family="Liberation Sans" font-size="17.6" fill="#e6e6e6">210</text><text x="1886.4" y="16.4" font-family="Liberation Sans" font-size="17.6" fill="#e6e6e6">220</text><text x="1970.4" y="16.4" font-family="Liberation Sans" font-size="17.6" fill="#e6e6e6">230</text><text x="2054.5" y="16.4" font-family="Liberation Sans" font-size="17.6" fill="#e6e6e6">240</text><text x="2138.6" y="16.4" font-family="Liberation Sans" font-size="17.6" fill="#e6e6e6">250</text><text x="2222.6" y="16.4" font-family="Liberation Sans" font-size="17.6" fill="#e6e6e6">260</text><text x="2306.7" y="16.4" font-family="Liberation Sans" font-size="17.6" fill="#e6e6e6">270</text><text x="2390.7" y="16.4" font-family="Liberation Sans" font-size="17.6" fill="#e6e6e6">280</text><text x="2474.8" y="16.4" font-family="Liberation Sans" font-size="17.6" fill="#e6e6e6">290</text><path d="M7 0 V24 M0 7.5 H24" stroke="#8a8a8a" stroke-width="1.3" stroke-dasharray="1.6 2.2"/><rect x="23.8" y="0" width="1.5" height="25" fill="#7e7e7e"/></svg>
<svg class="a" style="left:334px;top:167px" width="26" height="1191" viewBox="0 0 26 1191"><rect x="0" y="0" width="24" height="1191" fill="#202020"/><rect x="24" y="0" width="1.6" height="1191" fill="#7e7e7e"/><path d="M21.5 2.59 H25 M0 11.00 H25 M21.5 19.42 H25 M21.5 27.83 H25 M21.5 36.25 H25 M21.5 44.66 H25 M18.5 53.08 H25 M21.5 61.49 H25 M21.5 69.91 H25 M21.5 78.32 H25 M21.5 86.74 H25 M0 95.15 H25 M21.5 103.57 H25 M21.5 111.98 H25 M21.5 120.40 H25 M21.5 128.81 H25 M18.5 137.23 H25 M21.5 145.64 H25 M21.5 154.06 H25 M21.5 162.47 H25 M21.5 170.88 H25 M0 179.30 H25 M21.5 187.72 H25 M21.5 196.13 H25 M21.5 204.55 H25 M21.5 212.96 H25 M18.5 221.38 H25 M21.5 229.79 H25 M21.5 238.20 H25 M21.5 246.62 H25 M21.5 255.03 H25 M0 263.45 H25 M21.5 271.87 H25 M21.5 280.28 H25 M21.5 288.69 H25 M21.5 297.11 H25 M18.5 305.52 H25 M21.5 313.94 H25 M21.5 322.36 H25 M21.5 330.77 H25 M21.5 339.19 H25 M0 347.60 H25 M21.5 356.01 H25 M21.5 364.43 H25 M21.5 372.85 H25 M21.5 381.26 H25 M18.5 389.67 H25 M21.5 398.09 H25 M21.5 406.50 H25 M21.5 414.92 H25 M21.5 423.34 H25 M0 431.75 H25 M21.5 440.16 H25 M21.5 448.58 H25 M21.5 457.00 H25 M21.5 465.41 H25 M18.5 473.83 H25 M21.5 482.24 H25 M21.5 490.65 H25 M21.5 499.07 H25 M21.5 507.48 H25 M0 515.90 H25 M21.5 524.32 H25 M21.5 532.73 H25 M21.5 541.14 H25 M21.5 549.56 H25 M18.5 557.97 H25 M21.5 566.39 H25 M21.5 574.80 H25 M21.5 583.22 H25 M21.5 591.63 H25 M0 600.05 H25 M21.5 608.46 H25 M21.5 616.88 H25 M21.5 625.29 H25 M21.5 633.71 H25 M18.5 642.12 H25 M21.5 650.54 H25 M21.5 658.95 H25 M21.5 667.37 H25 M21.5 675.78 H25 M0 684.20 H25 M21.5 692.62 H25 M21.5 701.03 H25 M21.5 709.44 H25 M21.5 717.86 H25 M18.5 726.27 H25 M21.5 734.69 H25 M21.5 743.11 H25 M21.5 751.52 H25 M21.5 759.93 H25 M0 768.35 H25 M21.5 776.76 H25 M21.5 785.18 H25 M21.5 793.60 H25 M21.5 802.01 H25 M18.5 810.42 H25 M21.5 818.84 H25 M21.5 827.25 H25 M21.5 835.67 H25 M21.5 844.09 H25 M0 852.50 H25 M21.5 860.91 H25 M21.5 869.33 H25 M21.5 877.74 H25 M21.5 886.16 H25 M18.5 894.58 H25 M21.5 902.99 H25 M21.5 911.40 H25 M21.5 919.82 H25 M21.5 928.23 H25 M0 936.65 H25 M21.5 945.06 H25 M21.5 953.48 H25 M21.5 961.89 H25 M21.5 970.31 H25 M18.5 978.72 H25 M21.5 987.14 H25 M21.5 995.55 H25 M21.5 1003.97 H25 M21.5 1012.38 H25 M0 1020.80 H25 M21.5 1029.21 H25 M21.5 1037.63 H25 M21.5 1046.04 H25 M21.5 1054.46 H25 M18.5 1062.88 H25 M21.5 1071.29 H25 M21.5 1079.70 H25 M21.5 1088.12 H25 M21.5 1096.53 H25 M0 1104.95 H25 M21.5 1113.37 H25 M21.5 1121.78 H25 M21.5 1130.19 H25 M21.5 1138.61 H25 M18.5 1147.02 H25 M21.5 1155.44 H25 M21.5 1163.86 H25 M21.5 1172.27 H25 M21.5 1180.68 H25 M0 1189.10 H25" stroke="#a8a8a8" stroke-width="1.3"/><text x="3.4" y="26.3" font-family="Liberation Sans" font-size="17.6" fill="#e6e6e6">2</text><text x="3.4" y="40.3" font-family="Liberation Sans" font-size="17.6" fill="#e6e6e6">0</text><text x="3.4" y="110.5" font-family="Liberation Sans" font-size="17.6" fill="#e6e6e6">1</text><text x="3.4" y="124.5" font-family="Liberation Sans" font-size="17.6" fill="#e6e6e6">0</text><text x="3.4" y="194.6" font-family="Liberation Sans" font-size="17.6" fill="#e6e6e6">0</text><text x="3.4" y="278.8" font-family="Liberation Sans" font-size="17.6" fill="#e6e6e6">1</text><text x="3.4" y="292.8" font-family="Liberation Sans" font-size="17.6" fill="#e6e6e6">0</text><text x="3.4" y="362.9" font-family="Liberation Sans" font-size="17.6" fill="#e6e6e6">2</text><text x="3.4" y="376.9" font-family="Liberation Sans" font-size="17.6" fill="#e6e6e6">0</text><text x="3.4" y="447.1" font-family="Liberation Sans" font-size="17.6" fill="#e6e6e6">3</text><text x="3.4" y="461.1" font-family="Liberation Sans" font-size="17.6" fill="#e6e6e6">0</text><text x="3.4" y="531.2" font-family="Liberation Sans" font-size="17.6" fill="#e6e6e6">4</text><text x="3.4" y="545.2" font-family="Liberation Sans" font-size="17.6" fill="#e6e6e6">0</text><text x="3.4" y="615.3" font-family="Liberation Sans" font-size="17.6" fill="#e6e6e6">5</text><text x="3.4" y="629.3" font-family="Liberation Sans" font-size="17.6" fill="#e6e6e6">0</text><text x="3.4" y="699.5" font-family="Liberation Sans" font-size="17.6" fill="#e6e6e6">6</text><text x="3.4" y="713.5" font-family="Liberation Sans" font-size="17.6" fill="#e6e6e6">0</text><text x="3.4" y="783.6" font-family="Liberation Sans" font-size="17.6" fill="#e6e6e6">7</text><text x="3.4" y="797.6" font-family="Liberation Sans" font-size="17.6" fill="#e6e6e6">0</text><text x="3.4" y="867.8" font-family="Liberation Sans" font-size="17.6" fill="#e6e6e6">8</text><text x="3.4" y="881.8" font-family="Liberation Sans" font-size="17.6" fill="#e6e6e6">0</text><text x="3.4" y="951.9" font-family="Liberation Sans" font-size="17.6" fill="#e6e6e6">9</text><text x="3.4" y="965.9" font-family="Liberation Sans" font-size="17.6" fill="#e6e6e6">0</text><text x="3.4" y="1036.1" font-family="Liberation Sans" font-size="17.6" fill="#e6e6e6">1</text><text x="3.4" y="1050.1" font-family="Liberation Sans" font-size="17.6" fill="#e6e6e6">0</text><text x="3.4" y="1064.1" font-family="Liberation Sans" font-size="17.6" fill="#e6e6e6">0</text><text x="3.4" y="1120.2" font-family="Liberation Sans" font-size="17.6" fill="#e6e6e6">1</text><text x="3.4" y="1134.2" font-family="Liberation Sans" font-size="17.6" fill="#e6e6e6">1</text><text x="3.4" y="1148.2" font-family="Liberation Sans" font-size="17.6" fill="#e6e6e6">0</text><text x="3.4" y="1204.4" font-family="Liberation Sans" font-size="17.6" fill="#e6e6e6">1</text><text x="3.4" y="1218.4" font-family="Liberation Sans" font-size="17.6" fill="#e6e6e6">2</text><text x="3.4" y="1232.4" font-family="Liberation Sans" font-size="17.6" fill="#e6e6e6">0</text></svg>
<div class="a" style="left:359px;top:168px;width:2499px;height:1190px;background:#6a6a6a"></div>
<div class="a" style="left:368px;top:346px;width:2490px;height:1009px;background:#fff;border-left:1px solid #000;border-top:1px solid #000"></div>
<div class="a" style="left:368px;top:1355px;width:2490px;height:3px;background:#000"></div>
<div class="a" style="left:369px;top:841px;width:2489px;height:394px;background:#dfe0e2"></div>
<div class="a" style="left:369px;top:840px;width:2489px;height:1px;background:#1010ff"></div>
<div class="a" style="left:368px;top:840px;width:1px;height:396px;background:#1010ff"></div>
<div class="a" style="left:369px;top:1235px;width:2489px;height:1px;background:#1010ff"></div>
<div class="a" style="left:502.2px;top:493px;width:338px;height:337px;border:2px solid #f41a1a;box-shadow:1px 1px 0 rgba(90,100,100,.5), 2px 2px 0 rgba(120,120,120,.15), inset 1px 1px 0 rgba(90,100,100,.4)"></div>
<svg class="a" style="left:589.8px;top:506px" width="164" height="164" viewBox="0 0 164 164"><circle cx="82.0" cy="82.0" r="80" fill="#1ea8cc"/><polygon points="82.00,8.50 88.32,17.81 96.34,9.91 100.72,20.28 110.13,14.09 112.41,25.12 122.83,20.89 122.92,32.14 133.97,30.03 131.86,41.08 143.11,41.17 138.88,51.59 149.91,53.87 143.72,63.28 154.09,67.66 146.19,75.68 155.50,82.00 146.19,88.32 154.09,96.34 143.72,100.72 149.91,110.13 138.88,112.41 143.11,122.83 131.86,122.92 133.97,133.97 122.92,131.86 122.83,143.11 112.41,138.88 110.13,149.91 100.72,143.72 96.34,154.09 88.32,146.19 82.00,155.50 75.68,146.19 67.66,154.09 63.28,143.72 53.87,149.91 51.59,138.88 41.17,143.11 41.08,131.86 30.03,133.97 32.14,122.92 20.89,122.83 25.12,112.41 14.09,110.13 20.28,100.72 9.91,96.34 17.81,88.32 8.50,82.00 17.81,75.68 9.91,67.66 20.28,63.28 14.09,53.87 25.12,51.59 20.89,41.17 32.14,41.08 30.03,30.03 41.08,32.14 41.17,20.89 51.59,25.12 53.87,14.09 63.28,20.28 67.66,9.91 75.68,17.81" fill="none" stroke="#fff" stroke-width="1.3" stroke-linejoin="miter"/><g transform="rotate(5.625 82.0 82.0)"><path d="M82.0 22.5 L79.2 27.5 L84.8 27.5 Z" fill="#fff"/></g><g transform="rotate(16.875 82.0 82.0)"><path d="M82.0 22.5 L79.2 27.5 L84.8 27.5 Z" fill="#fff"/></g><g transform="rotate(28.125 82.0 82.0)"><path d="M82.0 22.5 L79.2 27.5 L84.8 27.5 Z" fill="#fff"/></g><g transform="rotate(39.375 82.0 82.0)"><path d="M82.0 22.5 L79.2 27.5 L84.8 27.5 Z" fill="#fff"/></g><g transform="rotate(50.625 82.0 82.0)"><path d="M82.0 22.5 L79.2 27.5 L84.8 27.5 Z" fill="#fff"/></g><g transform="rotate(61.875 82.0 82.0)"><path d="M82.0 22.5 L79.2 27.5 L84.8 27.5 Z" fill="#fff"/></g><g transform="rotate(73.125 82.0 82.0)"><path d="M82.0 22.5 L79.2 27.5 L84.8 27.5 Z" fill="#fff"/></g><g transform="rotate(84.375 82.0 82.0)"><path d="M82.0 22.5 L79.2 27.5 L84.8 27.5 Z" fill="#fff"/></g><g transform="rotate(95.625 82.0 82.0)"><path d="M82.0 22.5 L79.2 27.5 L84.8 27.5 Z" fill="#fff"/></g><g transform="rotate(106.875 82.0 82.0)"><path d="M82.0 22.5 L79.2 27.5 L84.8 27.5 Z" fill="#fff"/></g><g transform="rotate(118.125 82.0 82.0)"><path d="M82.0 22.5 L79.2 27.5 L84.8 27.5 Z" fill="#fff"/></g><g transform="rotate(129.375 82.0 82.0)"><path d="M82.0 22.5 L79.2 27.5 L84.8 27.5 Z" fill="#fff"/></g><g transform="rotate(140.625 82.0 82.0)"><path d="M82.0 22.5 L79.2 27.5 L84.8 27.5 Z" fill="#fff"/></g><g transform="rotate(151.875 82.0 82.0)"><path d="M82.0 22.5 L79.2 27.5 L84.8 27.5 Z" fill="#fff"/></g><g transform="rotate(163.125 82.0 82.0)"><path d="M82.0 22.5 L79.2 27.5 L84.8 27.5 Z" fill="#fff"/></g><g transform="rotate(174.375 82.0 82.0)"><path d="M82.0 22.5 L79.2 27.5 L84.8 27.5 Z" fill="#fff"/></g><g transform="rotate(185.625 82.0 82.0)"><path d="M82.0 22.5 L79.2 27.5 L84.8 27.5 Z" fill="#fff"/></g><g transform="rotate(196.875 82.0 82.0)"><path d="M82.0 22.5 L79.2 27.5 L84.8 27.5 Z" fill="#fff"/></g><g transform="rotate(208.125 82.0 82.0)"><path d="M82.0 22.5 L79.2 27.5 L84.8 27.5 Z" fill="#fff"/></g><g transform="rotate(219.375 82.0 82.0)"><path d="M82.0 22.5 L79.2 27.5 L84.8 27.5 Z" fill="#fff"/></g><g transform="rotate(230.625 82.0 82.0)"><path d="M82.0 22.5 L79.2 27.5 L84.8 27.5 Z" fill="#fff"/></g><g transform="rotate(241.875 82.0 82.0)"><path d="M82.0 22.5 L79.2 27.5 L84.8 27.5 Z" fill="#fff"/></g><g transform="rotate(253.125 82.0 82.0)"><path d="M82.0 22.5 L79.2 27.5 L84.8 27.5 Z" fill="#fff"/></g><g transform="rotate(264.375 82.0 82.0)"><path d="M82.0 22.5 L79.2 27.5 L84.8 27.5 Z" fill="#fff"/></g><g transform="rotate(275.625 82.0 82.0)"><path d="M82.0 22.5 L79.2 27.5 L84.8 27.5 Z" fill="#fff"/></g><g transform="rotate(286.875 82.0 82.0)"><path d="M82.0 22.5 L79.2 27.5 L84.8 27.5 Z" fill="#fff"/></g><g transform="rotate(298.125 82.0 82.0)"><path d="M82.0 22.5 L79.2 27.5 L84.8 27.5 Z" fill="#fff"/></g><g transform="rotate(309.375 82.0 82.0)"><path d="M82.0 22.5 L79.2 27.5 L84.8 27.5 Z" fill="#fff"/></g><g transform="rotate(320.625 82.0 82.0)"><path d="M82.0 22.5 L79.2 27.5 L84.8 27.5 Z" fill="#fff"/></g><g transform="rotate(331.875 82.0 82.0)"><path d="M82.0 22.5 L79.2 27.5 L84.8 27.5 Z" fill="#fff"/></g><g transform="rotate(343.125 82.0 82.0)"><path d="M82.0 22.5 L79.2 27.5 L84.8 27.5 Z" fill="#fff"/></g><g transform="rotate(354.375 82.0 82.0)"><path d="M82.0 22.5 L79.2 27.5 L84.8 27.5 Z" fill="#fff"/></g><circle cx="82.0" cy="82.0" r="50.5" fill="none" stroke="#fff" stroke-width="1.3"/><g transform="rotate(0.000 82.0 82.0)"><path d="M82.0 82.0 C48.0 66.0 56.0 38.0 82.0 32.0 C108.0 38.0 116.0 66.0 82.0 82.0 Z" fill="none" stroke="#fff" stroke-width="1.1"/></g><g transform="rotate(72.000 82.0 82.0)"><path d="M82.0 82.0 C48.0 66.0 56.0 38.0 82.0 32.0 C108.0 38.0 116.0 66.0 82.0 82.0 Z" fill="none" stroke="#fff" stroke-width="1.1"/></g><g transform="rotate(144.000 82.0 82.0)"><path d="M82.0 82.0 C48.0 66.0 56.0 38.0 82.0 32.0 C108.0 38.0 116.0 66.0 82.0 82.0 Z" fill="none" stroke="#fff" stroke-width="1.1"/></g><g transform="rotate(216.000 82.0 82.0)"><path d="M82.0 82.0 C48.0 66.0 56.0 38.0 82.0 32.0 C108.0 38.0 116.0 66.0 82.0 82.0 Z" fill="none" stroke="#fff" stroke-width="1.1"/></g><g transform="rotate(288.000 82.0 82.0)"><path d="M82.0 82.0 C48.0 66.0 56.0 38.0 82.0 32.0 C108.0 38.0 116.0 66.0 82.0 82.0 Z" fill="none" stroke="#fff" stroke-width="1.1"/></g><g transform="rotate(0.000 82.0 82.0)"><path d="M82.0 70.0 C70.0 62.0 73.0 50.0 82.0 43.0 C91.0 50.0 94.0 62.0 82.0 70.0 Z" fill="none" stroke="#fff" stroke-width="3.2"/></g><g transform="rotate(72.000 82.0 82.0)"><path d="M82.0 70.0 C70.0 62.0 73.0 50.0 82.0 43.0 C91.0 50.0 94.0 62.0 82.0 70.0 Z" fill="none" stroke="#fff" stroke-width="3.2"/></g><g transform="rotate(144.000 82.0 82.0)"><path d="M82.0 70.0 C70.0 62.0 73.0 50.0 82.0 43.0 C91.0 50.0 94.0 62.0 82.0 70.0 Z" fill="none" stroke="#fff" stroke-width="3.2"/></g><g transform="rotate(216.000 82.0 82.0)"><path d="M82.0 70.0 C70.0 62.0 73.0 50.0 82.0 43.0 C91.0 50.0 94.0 62.0 82.0 70.0 Z" fill="none" stroke="#fff" stroke-width="3.2"/></g><g transform="rotate(288.000 82.0 82.0)"><path d="M82.0 70.0 C70.0 62.0 73.0 50.0 82.0 43.0 C91.0 50.0 94.0 62.0 82.0 70.0 Z" fill="none" stroke="#fff" stroke-width="3.2"/></g><g transform="rotate(0.000 82.0 82.0)"><path d="M82.0 81.0 C76.0 74.0 77.0 65.0 82.0 59.0 C87.0 65.0 88.0 74.0 82.0 81.0 Z" fill="#fff"/></g><g transform="rotate(72.000 82.0 82.0)"><path d="M82.0 81.0 C76.0 74.0 77.0 65.0 82.0 59.0 C87.0 65.0 88.0 74.0 82.0 81.0 Z" fill="#fff"/></g><g transform="rotate(144.000 82.0 82.0)"><path d="M82.0 81.0 C76.0 74.0 77.0 65.0 82.0 59.0 C87.0 65.0 88.0 74.0 82.0 81.0 Z" fill="#fff"/></g><g transform="rotate(216.000 82.0 82.0)"><path d="M82.0 81.0 C76.0 74.0 77.0 65.0 82.0 59.0 C87.0 65.0 88.0 74.0 82.0 81.0 Z" fill="#fff"/></g><g transform="rotate(288.000 82.0 82.0)"><path d="M82.0 81.0 C76.0 74.0 77.0 65.0 82.0 59.0 C87.0 65.0 88.0 74.0 82.0 81.0 Z" fill="#fff"/></g><g transform="rotate(36.000 82.0 82.0)"><path d="M82.0 70.0 L82.0 51.0" stroke="#fff" stroke-width="1.4"/></g><g transform="rotate(108.000 82.0 82.0)"><path d="M82.0 70.0 L82.0 51.0" stroke="#fff" stroke-width="1.4"/></g><g transform="rotate(180.000 82.0 82.0)"><path d="M82.0 70.0 L82.0 51.0" stroke="#fff" stroke-width="1.4"/></g><g transform="rotate(252.000 82.0 82.0)"><path d="M82.0 70.0 L82.0 51.0" stroke="#fff" stroke-width="1.4"/></g><g transform="rotate(324.000 82.0 82.0)"><path d="M82.0 70.0 L82.0 51.0" stroke="#fff" stroke-width="1.4"/></g><circle cx="82.0" cy="82.0" r="3" fill="#fff"/><g transform="rotate(36.000 82.0 82.0)"><path d="M82.0 52.0 C79.0 49.0 74.0 46.0 76.0 42.0 C78.0 39.0 82.0 41.0 82.0 44.0 C82.0 41.0 86.0 39.0 88.0 42.0 C90.0 46.0 85.0 49.0 82.0 52.0 Z" fill="none" stroke="#fff" stroke-width="0.9"/></g><g transform="rotate(108.000 82.0 82.0)"><path d="M82.0 52.0 C79.0 49.0 74.0 46.0 76.0 42.0 C78.0 39.0 82.0 41.0 82.0 44.0 C82.0 41.0 86.0 39.0 88.0 42.0 C90.0 46.0 85.0 49.0 82.0 52.0 Z" fill="none" stroke="#fff" stroke-width="0.9"/></g><g transform="rotate(180.000 82.0 82.0)"><path d="M82.0 52.0 C79.0 49.0 74.0 46.0 76.0 42.0 C78.0 39.0 82.0 41.0 82.0 44.0 C82.0 41.0 86.0 39.0 88.0 42.0 C90.0 46.0 85.0 49.0 82.0 52.0 Z" fill="none" stroke="#fff" stroke-width="0.9"/></g><g transform="rotate(252.000 82.0 82.0)"><path d="M82.0 52.0 C79.0 49.0 74.0 46.0 76.0 42.0 C78.0 39.0 82.0 41.0 82.0 44.0 C82.0 41.0 86.0 39.0 88.0 42.0 C90.0 46.0 85.0 49.0 82.0 52.0 Z" fill="none" stroke="#fff" stroke-width="0.9"/></g><g transform="rotate(324.000 82.0 82.0)"><path d="M82.0 52.0 C79.0 49.0 74.0 46.0 76.0 42.0 C78.0 39.0 82.0 41.0 82.0 44.0 C82.0 41.0 86.0 39.0 88.0 42.0 C90.0 46.0 85.0 49.0 82.0 52.0 Z" fill="none" stroke="#fff" stroke-width="0.9"/></g></svg>
<div class="a" style="left:589.8px;top:506px;width:164px;height:164px;border:1px solid #5ea1fb"></div>
<svg class="a" style="left:598.8px;top:501px" width="26" height="12" viewBox="0 0 26 12"><rect x="0" y="0" width="26" height="12" fill="#fff"/><rect x="2" y="2" width="12" height="8" rx="4" fill="none" stroke="#1b78e6" stroke-width="2.3"/><rect x="10" y="2" width="12" height="8" rx="4" fill="none" stroke="#1b78e6" stroke-width="2.3"/></svg>
<div class="a" style="left:520.2px;top:700px;width:304px;height:116px;border:1px solid #5ea1fb"></div>
<div class="t" style="left:520.2px;top:694.5px;width:304px;text-align:center;font-family:'Liberation Serif',serif;font-size:34px;line-height:42.3px;color:#111">Beispieltext<br>Element 1</div>
<div class="a" style="left:880.0px;top:493px;width:338px;height:337px;border:2px solid #f41a1a;box-shadow:1px 1px 0 rgba(90,100,100,.5), 2px 2px 0 rgba(120,120,120,.15), inset 1px 1px 0 rgba(90,100,100,.4)"></div>
<svg class="a" style="left:967.6px;top:506px" width="164" height="164" viewBox="0 0 164 164"><circle cx="82.0" cy="82.0" r="80" fill="#df176f"/><polygon points="97.02,6.48 105.73,24.72 124.78,17.98 125.84,38.16 146.02,39.22 139.28,58.27 157.52,66.98 144.00,82.00 157.52,97.02 139.28,105.73 146.02,124.78 125.84,125.84 124.78,146.02 105.73,139.28 97.02,157.52 82.00,144.00 66.98,157.52 58.27,139.28 39.22,146.02 38.16,125.84 17.98,124.78 24.72,105.73 6.48,97.02 20.00,82.00 6.48,66.98 24.72,58.27 17.98,39.22 38.16,38.16 39.22,17.98 58.27,24.72 66.98,6.48 82.00,20.00" fill="none" stroke="#fff" stroke-width="1.2"/><g transform="rotate(22.500 82.0 82.0)"><path d="M75.0 30.0 C66.0 26.0 65.0 14.0 73.0 12.0 C80.0 11.0 81.0 20.0 75.0 21.0" fill="none" stroke="#fff" stroke-width="2.6"/><circle cx="73.5" cy="17.0" r="1.8" fill="#fff"/><path d="M89.0 30.0 C98.0 26.0 99.0 14.0 91.0 12.0 C84.0 11.0 83.0 20.0 89.0 21.0" fill="none" stroke="#fff" stroke-width="2.6"/><circle cx="90.5" cy="17.0" r="1.8" fill="#fff"/><path d="M82.0 32.0 L79.0 24.0 L82.0 27.0 L85.0 24.0 Z" fill="#fff"/></g><g transform="rotate(67.500 82.0 82.0)"><path d="M75.0 30.0 C66.0 26.0 65.0 14.0 73.0 12.0 C80.0 11.0 81.0 20.0 75.0 21.0" fill="none" stroke="#fff" stroke-width="2.6"/><circle cx="73.5" cy="17.0" r="1.8" fill="#fff"/><path d="M89.0 30.0 C98.0 26.0 99.0 14.0 91.0 12.0 C84.0 11.0 83.0 20.0 89.0 21.0" fill="none" stroke="#fff" stroke-width="2.6"/><circle cx="90.5" cy="17.0" r="1.8" fill="#fff"/><path d="M82.0 32.0 L79.0 24.0 L82.0 27.0 L85.0 24.0 Z" fill="#fff"/></g><g transform="rotate(112.500 82.0 82.0)"><path d="M75.0 30.0 C66.0 26.0 65.0 14.0 73.0 12.0 C80.0 11.0 81.0 20.0 75.0 21.0" fill="none" stroke="#fff" stroke-width="2.6"/><circle cx="73.5" cy="17.0" r="1.8" fill="#fff"/><path d="M89.0 30.0 C98.0 26.0 99.0 14.0 91.0 12.0 C84.0 11.0 83.0 20.0 89.0 21.0" fill="none" stroke="#fff" stroke-width="2.6"/><circle cx="90.5" cy="17.0" r="1.8" fill="#fff"/><path d="M82.0 32.0 L79.0 24.0 L82.0 27.0 L85.0 24.0 Z" fill="#fff"/></g><g transform="rotate(157.500 82.0 82.0)"><path d="M75.0 30.0 C66.0 26.0 65.0 14.0 73.0 12.0 C80.0 11.0 81.0 20.0 75.0 21.0" fill="none" stroke="#fff" stroke-width="2.6"/><circle cx="73.5" cy="17.0" r="1.8" fill="#fff"/><path d="M89.0 30.0 C98.0 26.0 99.0 14.0 91.0 12.0 C84.0 11.0 83.0 20.0 89.0 21.0" fill="none" stroke="#fff" stroke-width="2.6"/><circle cx="90.5" cy="17.0" r="1.8" fill="#fff"/><path d="M82.0 32.0 L79.0 24.0 L82.0 27.0 L85.0 24.0 Z" fill="#fff"/></g><g transform="rotate(202.500 82.0 82.0)"><path d="M75.0 30.0 C66.0 26.0 65.0 14.0 73.0 12.0 C80.0 11.0 81.0 20.0 75.0 21.0" fill="none" stroke="#fff" stroke-width="2.6"/><circle cx="73.5" cy="17.0" r="1.8" fill="#fff"/><path d="M89.0 30.0 C98.0 26.0 99.0 14.0 91.0 12.0 C84.0 11.0 83.0 20.0 89.0 21.0" fill="none" stroke="#fff" stroke-width="2.6"/><circle cx="90.5" cy="17.0" r="1.8" fill="#fff"/><path d="M82.0 32.0 L79.0 24.0 L82.0 27.0 L85.0 24.0 Z" fill="#fff"/></g><g transform="rotate(247.500 82.0 82.0)"><path d="M75.0 30.0 C66.0 26.0 65.0 14.0 73.0 12.0 C80.0 11.0 81.0 20.0 75.0 21.0" fill="none" stroke="#fff" stroke-width="2.6"/><circle cx="73.5" cy="17.0" r="1.8" fill="#fff"/><path d="M89.0 30.0 C98.0 26.0 99.0 14.0 91.0 12.0 C84.0 11.0 83.0 20.0 89.0 21.0" fill="none" stroke="#fff" stroke-width="2.6"/><circle cx="90.5" cy="17.0" r="1.8" fill="#fff"/><path d="M82.0 32.0 L79.0 24.0 L82.0 27.0 L85.0 24.0 Z" fill="#fff"/></g><g transform="rotate(292.500 82.0 82.0)"><path d="M75.0 30.0 C66.0 26.0 65.0 14.0 73.0 12.0 C80.0 11.0 81.0 20.0 75.0 21.0" fill="none" stroke="#fff" stroke-width="2.6"/><circle cx="73.5" cy="17.0" r="1.8" fill="#fff"/><path d="M89.0 30.0 C98.0 26.0 99.0 14.0 91.0 12.0 C84.0 11.0 83.0 20.0 89.0 21.0" fill="none" stroke="#fff" stroke-width="2.6"/><circle cx="90.5" cy="17.0" r="1.8" fill="#fff"/><path d="M82.0 32.0 L79.0 24.0 L82.0 27.0 L85.0 24.0 Z" fill="#fff"/></g><g transform="rotate(337.500 82.0 82.0)"><path d="M75.0 30.0 C66.0 26.0 65.0 14.0 73.0 12.0 C80.0 11.0 81.0 20.0 75.0 21.0" fill="none" stroke="#fff" stroke-width="2.6"/><circle cx="73.5" cy="17.0" r="1.8" fill="#fff"/><path d="M89.0 30.0 C98.0 26.0 99.0 14.0 91.0 12.0 C84.0 11.0 83.0 20.0 89.0 21.0" fill="none" stroke="#fff" stroke-width="2.6"/><circle cx="90.5" cy="17.0" r="1.8" fill="#fff"/><path d="M82.0 32.0 L79.0 24.0 L82.0 27.0 L85.0 24.0 Z" fill="#fff"/></g><g transform="rotate(0.000 82.0 82.0)"><path d="M76.0 30.0 C67.0 26.0 66.0 14.0 74.0 13.0 C81.0 11.0 82.0 20.0 76.0 21.0" fill="none" stroke="#fff" stroke-width="2.6"/><circle cx="74.5" cy="17.0" r="1.8" fill="#fff"/><path d="M88.0 30.0 C97.0 26.0 98.0 14.0 90.0 13.0 C83.0 11.0 82.0 20.0 88.0 21.0" fill="none" stroke="#fff" stroke-width="2.6"/><circle cx="89.5" cy="17.0" r="1.8" fill="#fff"/></g><g transform="rotate(45.000 82.0 82.0)"><path d="M76.0 30.0 C67.0 26.0 66.0 14.0 74.0 13.0 C81.0 11.0 82.0 20.0 76.0 21.0" fill="none" stroke="#fff" stroke-width="2.6"/><circle cx="74.5" cy="17.0" r="1.8" fill="#fff"/><path d="M88.0 30.0 C97.0 26.0 98.0 14.0 90.0 13.0 C83.0 11.0 82.0 20.0 88.0 21.0" fill="none" stroke="#fff" stroke-width="2.6"/><circle cx="89.5" cy="17.0" r="1.8" fill="#fff"/></g><g transform="rotate(90.000 82.0 82.0)"><path d="M76.0 30.0 C67.0 26.0 66.0 14.0 74.0 13.0 C81.0 11.0 82.0 20.0 76.0 21.0" fill="none" stroke="#fff" stroke-width="2.6"/><circle cx="74.5" cy="17.0" r="1.8" fill="#fff"/><path d="M88.0 30.0 C97.0 26.0 98.0 14.0 90.0 13.0 C83.0 11.0 82.0 20.0 88.0 21.0" fill="none" stroke="#fff" stroke-width="2.6"/><circle cx="89.5" cy="17.0" r="1.8" fill="#fff"/></g><g transform="rotate(135.000 82.0 82.0)"><path d="M76.0 30.0 C67.0 26.0 66.0 14.0 74.0 13.0 C81.0 11.0 82.0 20.0 76.0 21.0" fill="none" stroke="#fff" stroke-width="2.6"/><circle cx="74.5" cy="17.0" r="1.8" fill="#fff"/><path d="M88.0 30.0 C97.0 26.0 98.0 14.0 90.0 13.0 C83.0 11.0 82.0 20.0 88.0 21.0" fill="none" stroke="#fff" stroke-width="2.6"/><circle cx="89.5" cy="17.0" r="1.8" fill="#fff"/></g><g transform="rotate(180.000 82.0 82.0)"><path d="M76.0 30.0 C67.0 26.0 66.0 14.0 74.0 13.0 C81.0 11.0 82.0 20.0 76.0 21.0" fill="none" stroke="#fff" stroke-width="2.6"/><circle cx="74.5" cy="17.0" r="1.8" fill="#fff"/><path d="M88.0 30.0 C97.0 26.0 98.0 14.0 90.0 13.0 C83.0 11.0 82.0 20.0 88.0 21.0" fill="none" stroke="#fff" stroke-width="2.6"/><circle cx="89.5" cy="17.0" r="1.8" fill="#fff"/></g><g transform="rotate(225.000 82.0 82.0)"><path d="M76.0 30.0 C67.0 26.0 66.0 14.0 74.0 13.0 C81.0 11.0 82.0 20.0 76.0 21.0" fill="none" stroke="#fff" stroke-width="2.6"/><circle cx="74.5" cy="17.0" r="1.8" fill="#fff"/><path d="M88.0 30.0 C97.0 26.0 98.0 14.0 90.0 13.0 C83.0 11.0 82.0 20.0 88.0 21.0" fill="none" stroke="#fff" stroke-width="2.6"/><circle cx="89.5" cy="17.0" r="1.8" fill="#fff"/></g><g transform="rotate(270.000 82.0 82.0)"><path d="M76.0 30.0 C67.0 26.0 66.0 14.0 74.0 13.0 C81.0 11.0 82.0 20.0 76.0 21.0" fill="none" stroke="#fff" stroke-width="2.6"/><circle cx="74.5" cy="17.0" r="1.8" fill="#fff"/><path d="M88.0 30.0 C97.0 26.0 98.0 14.0 90.0 13.0 C83.0 11.0 82.0 20.0 88.0 21.0" fill="none" stroke="#fff" stroke-width="2.6"/><circle cx="89.5" cy="17.0" r="1.8" fill="#fff"/></g><g transform="rotate(315.000 82.0 82.0)"><path d="M76.0 30.0 C67.0 26.0 66.0 14.0 74.0 13.0 C81.0 11.0 82.0 20.0 76.0 21.0" fill="none" stroke="#fff" stroke-width="2.6"/><circle cx="74.5" cy="17.0" r="1.8" fill="#fff"/><path d="M88.0 30.0 C97.0 26.0 98.0 14.0 90.0 13.0 C83.0 11.0 82.0 20.0 88.0 21.0" fill="none" stroke="#fff" stroke-width="2.6"/><circle cx="89.5" cy="17.0" r="1.8" fill="#fff"/></g><circle cx="82.0" cy="82.0" r="45" fill="none" stroke="#fff" stroke-width="2.4"/><g transform="rotate(0.000 82.0 82.0)"><path d="M79.0 62.0 C76.0 52.0 66.0 52.0 67.0 44.0 C68.0 38.0 76.0 40.0 74.0 46.0" fill="none" stroke="#fff" stroke-width="1.8"/><path d="M85.0 62.0 C88.0 52.0 98.0 52.0 97.0 44.0 C96.0 38.0 88.0 40.0 90.0 46.0" fill="none" stroke="#fff" stroke-width="1.8"/><path d="M82.0 50.0 L77.0 58.0 L82.0 55.0 L87.0 58.0 Z" fill="#fff"/></g><g transform="rotate(90.000 82.0 82.0)"><path d="M79.0 62.0 C76.0 52.0 66.0 52.0 67.0 44.0 C68.0 38.0 76.0 40.0 74.0 46.0" fill="none" stroke="#fff" stroke-width="1.8"/><path d="M85.0 62.0 C88.0 52.0 98.0 52.0 97.0 44.0 C96.0 38.0 88.0 40.0 90.0 46.0" fill="none" stroke="#fff" stroke-width="1.8"/><path d="M82.0 50.0 L77.0 58.0 L82.0 55.0 L87.0 58.0 Z" fill="#fff"/></g><g transform="rotate(180.000 82.0 82.0)"><path d="M79.0 62.0 C76.0 52.0 66.0 52.0 67.0 44.0 C68.0 38.0 76.0 40.0 74.0 46.0" fill="none" stroke="#fff" stroke-width="1.8"/><path d="M85.0 62.0 C88.0 52.0 98.0 52.0 97.0 44.0 C96.0 38.0 88.0 40.0 90.0 46.0" fill="none" stroke="#fff" stroke-width="1.8"/><path d="M82.0 50.0 L77.0 58.0 L82.0 55.0 L87.0 58.0 Z" fill="#fff"/></g><g transform="rotate(270.000 82.0 82.0)"><path d="M79.0 62.0 C76.0 52.0 66.0 52.0 67.0 44.0 C68.0 38.0 76.0 40.0 74.0 46.0" fill="none" stroke="#fff" stroke-width="1.8"/><path d="M85.0 62.0 C88.0 52.0 98.0 52.0 97.0 44.0 C96.0 38.0 88.0 40.0 90.0 46.0" fill="none" stroke="#fff" stroke-width="1.8"/><path d="M82.0 50.0 L77.0 58.0 L82.0 55.0 L87.0 58.0 Z" fill="#fff"/></g><path d="M82.0 69.5 L61.5 49.0 L47.5 47.0 L49.0 61.5 L69.5 82.0 L49.0 102.5 L47.0 116.5 L61.5 115.0 L82.0 94.5 L102.5 115.0 L116.5 117.0 L115.0 102.5 L94.5 82.0 L115.0 61.5 L117.0 47.5 L102.5 49.0 Z" fill="#df176f" stroke="#fff" stroke-width="1.8" stroke-linejoin="miter"/></svg>
<div class="a" style="left:967.6px;top:506px;width:164px;height:164px;border:1px solid #5ea1fb"></div>
<svg class="a" style="left:976.6px;top:501px" width="26" height="12" viewBox="0 0 26 12"><rect x="0" y="0" width="26" height="12" fill="#fff"/><rect x="2" y="2" width="12" height="8" rx="4" fill="none" stroke="#1b78e6" stroke-width="2.3"/><rect x="10" y="2" width="12" height="8" rx="4" fill="none" stroke="#1b78e6" stroke-width="2.3"/></svg>
<div class="a" style="left:898.0px;top:700px;width:304px;height:116px;border:1px solid #5ea1fb"></div>
<div class="t" style="left:898.0px;top:694.5px;width:304px;text-align:center;font-family:'Liberation Serif',serif;font-size:34px;line-height:42.3px;color:#111">Beispieltext<br>Element 2</div>
<div class="a" style="left:1257.8px;top:493px;width:338px;height:337px;border:2px solid #f41a1a;box-shadow:1px 1px 0 rgba(90,100,100,.5), 2px 2px 0 rgba(120,120,120,.15), inset 1px 1px 0 rgba(90,100,100,.4)"></div>
<svg class="a" style="left:1345.4px;top:506px" width="164" height="164" viewBox="0 0 164 164"><circle cx="82.0" cy="82.0" r="80" fill="#126a33"/><g transform="rotate(11.250 82.0 82.0)"><path d="M78.0 20.0 C68.0 18.0 68.0 4.0 79.0 4.0 C88.0 4.0 90.0 14.0 83.0 16.0" fill="none" stroke="#fff" stroke-width="4.2"/><circle cx="79.0" cy="11.0" r="3.2" fill="#126a33"/></g><g transform="rotate(33.750 82.0 82.0)"><path d="M78.0 20.0 C68.0 18.0 68.0 4.0 79.0 4.0 C88.0 4.0 90.0 14.0 83.0 16.0" fill="none" stroke="#fff" stroke-width="4.2"/><circle cx="79.0" cy="11.0" r="3.2" fill="#126a33"/></g><g transform="rotate(56.250 82.0 82.0)"><path d="M78.0 20.0 C68.0 18.0 68.0 4.0 79.0 4.0 C88.0 4.0 90.0 14.0 83.0 16.0" fill="none" stroke="#fff" stroke-width="4.2"/><circle cx="79.0" cy="11.0" r="3.2" fill="#126a33"/></g><g transform="rotate(78.750 82.0 82.0)"><path d="M78.0 20.0 C68.0 18.0 68.0 4.0 79.0 4.0 C88.0 4.0 90.0 14.0 83.0 16.0" fill="none" stroke="#fff" stroke-width="4.2"/><circle cx="79.0" cy="11.0" r="3.2" fill="#126a33"/></g><g transform="rotate(101.250 82.0 82.0)"><path d="M78.0 20.0 C68.0 18.0 68.0 4.0 79.0 4.0 C88.0 4.0 90.0 14.0 83.0 16.0" fill="none" stroke="#fff" stroke-width="4.2"/><circle cx="79.0" cy="11.0" r="3.2" fill="#126a33"/></g><g transform="rotate(123.750 82.0 82.0)"><path d="M78.0 20.0 C68.0 18.0 68.0 4.0 79.0 4.0 C88.0 4.0 90.0 14.0 83.0 16.0" fill="none" stroke="#fff" stroke-width="4.2"/><circle cx="79.0" cy="11.0" r="3.2" fill="#126a33"/></g><g transform="rotate(146.250 82.0 82.0)"><path d="M78.0 20.0 C68.0 18.0 68.0 4.0 79.0 4.0 C88.0 4.0 90.0 14.0 83.0 16.0" fill="none" stroke="#fff" stroke-width="4.2"/><circle cx="79.0" cy="11.0" r="3.2" fill="#126a33"/></g><g transform="rotate(168.750 82.0 82.0)"><path d="M78.0 20.0 C68.0 18.0 68.0 4.0 79.0 4.0 C88.0 4.0 90.0 14.0 83.0 16.0" fill="none" stroke="#fff" stroke-width="4.2"/><circle cx="79.0" cy="11.0" r="3.2" fill="#126a33"/></g><g transform="rotate(191.250 82.0 82.0)"><path d="M78.0 20.0 C68.0 18.0 68.0 4.0 79.0 4.0 C88.0 4.0 90.0 14.0 83.0 16.0" fill="none" stroke="#fff" stroke-width="4.2"/><circle cx="79.0" cy="11.0" r="3.2" fill="#126a33"/></g><g transform="rotate(213.750 82.0 82.0)"><path d="M78.0 20.0 C68.0 18.0 68.0 4.0 79.0 4.0 C88.0 4.0 90.0 14.0 83.0 16.0" fill="none" stroke="#fff" stroke-width="4.2"/><circle cx="79.0" cy="11.0" r="3.2" fill="#126a33"/></g><g transform="rotate(236.250 82.0 82.0)"><path d="M78.0 20.0 C68.0 18.0 68.0 4.0 79.0 4.0 C88.0 4.0 90.0 14.0 83.0 16.0" fill="none" stroke="#fff" stroke-width="4.2"/><circle cx="79.0" cy="11.0" r="3.2" fill="#126a33"/></g><g transform="rotate(258.750 82.0 82.0)"><path d="M78.0 20.0 C68.0 18.0 68.0 4.0 79.0 4.0 C88.0 4.0 90.0 14.0 83.0 16.0" fill="none" stroke="#fff" stroke-width="4.2"/><circle cx="79.0" cy="11.0" r="3.2" fill="#126a33"/></g><g transform="rotate(281.250 82.0 82.0)"><path d="M78.0 20.0 C68.0 18.0 68.0 4.0 79.0 4.0 C88.0 4.0 90.0 14.0 83.0 16.0" fill="none" stroke="#fff" stroke-width="4.2"/><circle cx="79.0" cy="11.0" r="3.2" fill="#126a33"/></g><g transform="rotate(303.750 82.0 82.0)"><path d="M78.0 20.0 C68.0 18.0 68.0 4.0 79.0 4.0 C88.0 4.0 90.0 14.0 83.0 16.0" fill="none" stroke="#fff" stroke-width="4.2"/><circle cx="79.0" cy="11.0" r="3.2" fill="#126a33"/></g><g transform="rotate(326.250 82.0 82.0)"><path d="M78.0 20.0 C68.0 18.0 68.0 4.0 79.0 4.0 C88.0 4.0 90.0 14.0 83.0 16.0" fill="none" stroke="#fff" stroke-width="4.2"/><circle cx="79.0" cy="11.0" r="3.2" fill="#126a33"/></g><g transform="rotate(348.750 82.0 82.0)"><path d="M78.0 20.0 C68.0 18.0 68.0 4.0 79.0 4.0 C88.0 4.0 90.0 14.0 83.0 16.0" fill="none" stroke="#fff" stroke-width="4.2"/><circle cx="79.0" cy="11.0" r="3.2" fill="#126a33"/></g><g transform="rotate(22.500 82.0 82.0)"><path d="M77.0 -2.0 L87.0 -2.0 L84.0 8.0 L80.0 8.0 Z" fill="#fff"/></g><g transform="rotate(67.500 82.0 82.0)"><path d="M77.0 -2.0 L87.0 -2.0 L84.0 8.0 L80.0 8.0 Z" fill="#fff"/></g><g transform="rotate(112.500 82.0 82.0)"><path d="M77.0 -2.0 L87.0 -2.0 L84.0 8.0 L80.0 8.0 Z" fill="#fff"/></g><g transform="rotate(157.500 82.0 82.0)"><path d="M77.0 -2.0 L87.0 -2.0 L84.0 8.0 L80.0 8.0 Z" fill="#fff"/></g><g transform="rotate(202.500 82.0 82.0)"><path d="M77.0 -2.0 L87.0 -2.0 L84.0 8.0 L80.0 8.0 Z" fill="#fff"/></g><g transform="rotate(247.500 82.0 82.0)"><path d="M77.0 -2.0 L87.0 -2.0 L84.0 8.0 L80.0 8.0 Z" fill="#fff"/></g><g transform="rotate(292.500 82.0 82.0)"><path d="M77.0 -2.0 L87.0 -2.0 L84.0 8.0 L80.0 8.0 Z" fill="#fff"/></g><g transform="rotate(337.500 82.0 82.0)"><path d="M77.0 -2.0 L87.0 -2.0 L84.0 8.0 L80.0 8.0 Z" fill="#fff"/></g><g transform="rotate(0.000 82.0 82.0)"><path d="M82.0 72.0 C56.0 54.0 60.0 28.0 82.0 17.0 C104.0 28.0 108.0 54.0 82.0 72.0 Z" fill="#126a33" stroke="#fff" stroke-width="2.4"/></g><g transform="rotate(45.000 82.0 82.0)"><path d="M82.0 72.0 C56.0 54.0 60.0 28.0 82.0 17.0 C104.0 28.0 108.0 54.0 82.0 72.0 Z" fill="#126a33" stroke="#fff" stroke-width="2.4"/></g><g transform="rotate(90.000 82.0 82.0)"><path d="M82.0 72.0 C56.0 54.0 60.0 28.0 82.0 17.0 C104.0 28.0 108.0 54.0 82.0 72.0 Z" fill="#126a33" stroke="#fff" stroke-width="2.4"/></g><g transform="rotate(135.000 82.0 82.0)"><path d="M82.0 72.0 C56.0 54.0 60.0 28.0 82.0 17.0 C104.0 28.0 108.0 54.0 82.0 72.0 Z" fill="#126a33" stroke="#fff" stroke-width="2.4"/></g><g transform="rotate(180.000 82.0 82.0)"><path d="M82.0 72.0 C56.0 54.0 60.0 28.0 82.0 17.0 C104.0 28.0 108.0 54.0 82.0 72.0 Z" fill="#126a33" stroke="#fff" stroke-width="2.4"/></g><g transform="rotate(225.000 82.0 82.0)"><path d="M82.0 72.0 C56.0 54.0 60.0 28.0 82.0 17.0 C104.0 28.0 108.0 54.0 82.0 72.0 Z" fill="#126a33" stroke="#fff" stroke-width="2.4"/></g><g transform="rotate(270.000 82.0 82.0)"><path d="M82.0 72.0 C56.0 54.0 60.0 28.0 82.0 17.0 C104.0 28.0 108.0 54.0 82.0 72.0 Z" fill="#126a33" stroke="#fff" stroke-width="2.4"/></g><g transform="rotate(315.000 82.0 82.0)"><path d="M82.0 72.0 C56.0 54.0 60.0 28.0 82.0 17.0 C104.0 28.0 108.0 54.0 82.0 72.0 Z" fill="#126a33" stroke="#fff" stroke-width="2.4"/></g><g transform="rotate(22.500 82.0 82.0)"><path d="M82.0 40.0 L78.0 32.0 L82.0 35.0 L86.0 32.0 Z" fill="#fff"/></g><g transform="rotate(67.500 82.0 82.0)"><path d="M82.0 40.0 L78.0 32.0 L82.0 35.0 L86.0 32.0 Z" fill="#fff"/></g><g transform="rotate(112.500 82.0 82.0)"><path d="M82.0 40.0 L78.0 32.0 L82.0 35.0 L86.0 32.0 Z" fill="#fff"/></g><g transform="rotate(157.500 82.0 82.0)"><path d="M82.0 40.0 L78.0 32.0 L82.0 35.0 L86.0 32.0 Z" fill="#fff"/></g><g transform="rotate(202.500 82.0 82.0)"><path d="M82.0 40.0 L78.0 32.0 L82.0 35.0 L86.0 32.0 Z" fill="#fff"/></g><g transform="rotate(247.500 82.0 82.0)"><path d="M82.0 40.0 L78.0 32.0 L82.0 35.0 L86.0 32.0 Z" fill="#fff"/></g><g transform="rotate(292.500 82.0 82.0)"><path d="M82.0 40.0 L78.0 32.0 L82.0 35.0 L86.0 32.0 Z" fill="#fff"/></g><g transform="rotate(337.500 82.0 82.0)"><path d="M82.0 40.0 L78.0 32.0 L82.0 35.0 L86.0 32.0 Z" fill="#fff"/></g><g transform="rotate(0.000 82.0 82.0)"><path d="M82.0 65.0 C72.0 55.0 73.0 42.0 82.0 32.0 C91.0 42.0 92.0 55.0 82.0 65.0 Z" fill="#126a33" stroke="#fff" stroke-width="1.5"/></g><g transform="rotate(45.000 82.0 82.0)"><path d="M82.0 65.0 C72.0 55.0 73.0 42.0 82.0 32.0 C91.0 42.0 92.0 55.0 82.0 65.0 Z" fill="#126a33" stroke="#fff" stroke-width="1.5"/></g><g transform="rotate(90.000 82.0 82.0)"><path d="M82.0 65.0 C72.0 55.0 73.0 42.0 82.0 32.0 C91.0 42.0 92.0 55.0 82.0 65.0 Z" fill="#126a33" stroke="#fff" stroke-width="1.5"/></g><g transform="rotate(135.000 82.0 82.0)"><path d="M82.0 65.0 C72.0 55.0 73.0 42.0 82.0 32.0 C91.0 42.0 92.0 55.0 82.0 65.0 Z" fill="#126a33" stroke="#fff" stroke-width="1.5"/></g><g transform="rotate(180.000 82.0 82.0)"><path d="M82.0 65.0 C72.0 55.0 73.0 42.0 82.0 32.0 C91.0 42.0 92.0 55.0 82.0 65.0 Z" fill="#126a33" stroke="#fff" stroke-width="1.5"/></g><g transform="rotate(225.000 82.0 82.0)"><path d="M82.0 65.0 C72.0 55.0 73.0 42.0 82.0 32.0 C91.0 42.0 92.0 55.0 82.0 65.0 Z" fill="#126a33" stroke="#fff" stroke-width="1.5"/></g><g transform="rotate(270.000 82.0 82.0)"><path d="M82.0 65.0 C72.0 55.0 73.0 42.0 82.0 32.0 C91.0 42.0 92.0 55.0 82.0 65.0 Z" fill="#126a33" stroke="#fff" stroke-width="1.5"/></g><g transform="rotate(315.000 82.0 82.0)"><path d="M82.0 65.0 C72.0 55.0 73.0 42.0 82.0 32.0 C91.0 42.0 92.0 55.0 82.0 65.0 Z" fill="#126a33" stroke="#fff" stroke-width="1.5"/></g><circle cx="82.0" cy="82.0" r="12.5" fill="#fff"/><circle cx="82.0" cy="82.0" r="9.5" fill="#126a33"/></svg>
<div class="a" style="left:1345.4px;top:506px;width:164px;height:164px;border:1px solid #5ea1fb"></div>
<svg class="a" style="left:1354.4px;top:501px" width="26" height="12" viewBox="0 0 26 12"><rect x="0" y="0" width="26" height="12" fill="#fff"/><rect x="2" y="2" width="12" height="8" rx="4" fill="none" stroke="#1b78e6" stroke-width="2.3"/><rect x="10" y="2" width="12" height="8" rx="4" fill="none" stroke="#1b78e6" stroke-width="2.3"/></svg>
<div class="a" style="left:1275.8px;top:700px;width:304px;height:116px;border:1px solid #5ea1fb"></div>
<div class="t" style="left:1275.8px;top:694.5px;width:304px;text-align:center;font-family:'Liberation Serif',serif;font-size:34px;line-height:42.3px;color:#111">Beispieltext<br>Element 3</div>
<div class="a" style="left:1635.6px;top:493px;width:338px;height:337px;border:2px solid #f41a1a;box-shadow:1px 1px 0 rgba(90,100,100,.5), 2px 2px 0 rgba(120,120,120,.15), inset 1px 1px 0 rgba(90,100,100,.4)"></div>
<svg class="a" style="left:1723.2px;top:506px" width="164" height="164" viewBox="0 0 164 164"><circle cx="82.0" cy="82.0" r="80" fill="#3e3a97"/><polygon points="82.00,8.50 88.32,17.81 96.34,9.91 100.72,20.28 110.13,14.09 112.41,25.12 122.83,20.89 122.92,32.14 133.97,30.03 131.86,41.08 143.11,41.17 138.88,51.59 149.91,53.87 143.72,63.28 154.09,67.66 146.19,75.68 155.50,82.00 146.19,88.32 154.09,96.34 143.72,100.72 149.91,110.13 138.88,112.41 143.11,122.83 131.86,122.92 133.97,133.97 122.92,131.86 122.83,143.11 112.41,138.88 110.13,149.91 100.72,143.72 96.34,154.09 88.32,146.19 82.00,155.50 75.68,146.19 67.66,154.09 63.28,143.72 53.87,149.91 51.59,138.88 41.17,143.11 41.08,131.86 30.03,133.97 32.14,122.92 20.89,122.83 25.12,112.41 14.09,110.13 20.28,100.72 9.91,96.34 17.81,88.32 8.50,82.00 17.81,75.68 9.91,67.66 20.28,63.28 14.09,53.87 25.12,51.59 20.89,41.17 32.14,41.08 30.03,30.03 41.08,32.14 41.17,20.89 51.59,25.12 53.87,14.09 63.28,20.28 67.66,9.91 75.68,17.81" fill="none" stroke="#fff" stroke-width="1.3" stroke-linejoin="miter"/><g transform="rotate(5.625 82.0 82.0)"><path d="M82.0 22.5 L79.2 27.5 L84.8 27.5 Z" fill="#fff"/></g><g transform="rotate(16.875 82.0 82.0)"><path d="M82.0 22.5 L79.2 27.5 L84.8 27.5 Z" fill="#fff"/></g><g transform="rotate(28.125 82.0 82.0)"><path d="M82.0 22.5 L79.2 27.5 L84.8 27.5 Z" fill="#fff"/></g><g transform="rotate(39.375 82.0 82.0)"><path d="M82.0 22.5 L79.2 27.5 L84.8 27.5 Z" fill="#fff"/></g><g transform="rotate(50.625 82.0 82.0)"><path d="M82.0 22.5 L79.2 27.5 L84.8 27.5 Z" fill="#fff"/></g><g transform="rotate(61.875 82.0 82.0)"><path d="M82.0 22.5 L79.2 27.5 L84.8 27.5 Z" fill="#fff"/></g><g transform="rotate(73.125 82.0 82.0)"><path d="M82.0 22.5 L79.2 27.5 L84.8 27.5 Z" fill="#fff"/></g><g transform="rotate(84.375 82.0 82.0)"><path d="M82.0 22.5 L79.2 27.5 L84.8 27.5 Z" fill="#fff"/></g><g transform="rotate(95.625 82.0 82.0)"><path d="M82.0 22.5 L79.2 27.5 L84.8 27.5 Z" fill="#fff"/></g><g transform="rotate(106.875 82.0 82.0)"><path d="M82.0 22.5 L79.2 27.5 L84.8 27.5 Z" fill="#fff"/></g><g transform="rotate(118.125 82.0 82.0)"><path d="M82.0 22.5 L79.2 27.5 L84.8 27.5 Z" fill="#fff"/></g><g transform="rotate(129.375 82.0 82.0)"><path d="M82.0 22.5 L79.2 27.5 L84.8 27.5 Z" fill="#fff"/></g><g transform="rotate(140.625 82.0 82.0)"><path d="M82.0 22.5 L79.2 27.5 L84.8 27.5 Z" fill="#fff"/></g><g transform="rotate(151.875 82.0 82.0)"><path d="M82.0 22.5 L79.2 27.5 L84.8 27.5 Z" fill="#fff"/></g><g transform="rotate(163.125 82.0 82.0)"><path d="M82.0 22.5 L79.2 27.5 L84.8 27.5 Z" fill="#fff"/></g><g transform="rotate(174.375 82.0 82.0)"><path d="M82.0 22.5 L79.2 27.5 L84.8 27.5 Z" fill="#fff"/></g><g transform="rotate(185.625 82.0 82.0)"><path d="M82.0 22.5 L79.2 27.5 L84.8 27.5 Z" fill="#fff"/></g><g transform="rotate(196.875 82.0 82.0)"><path d="M82.0 22.5 L79.2 27.5 L84.8 27.5 Z" fill="#fff"/></g><g transform="rotate(208.125 82.0 82.0)"><path d="M82.0 22.5 L79.2 27.5 L84.8 27.5 Z" fill="#fff"/></g><g transform="rotate(219.375 82.0 82.0)"><path d="M82.0 22.5 L79.2 27.5 L84.8 27.5 Z" fill="#fff"/></g><g transform="rotate(230.625 82.0 82.0)"><path d="M82.0 22.5 L79.2 27.5 L84.8 27.5 Z" fill="#fff"/></g><g transform="rotate(241.875 82.0 82.0)"><path d="M82.0 22.5 L79.2 27.5 L84.8 27.5 Z" fill="#fff"/></g><g transform="rotate(253.125 82.0 82.0)"><path d="M82.0 22.5 L79.2 27.5 L84.8 27.5 Z" fill="#fff"/></g><g transform="rotate(264.375 82.0 82.0)"><path d="M82.0 22.5 L79.2 27.5 L84.8 27.5 Z" fill="#fff"/></g><g transform="rotate(275.625 82.0 82.0)"><path d="M82.0 22.5 L79.2 27.5 L84.8 27.5 Z" fill="#fff"/></g><g transform="rotate(286.875 82.0 82.0)"><path d="M82.0 22.5 L79.2 27.5 L84.8 27.5 Z" fill="#fff"/></g><g transform="rotate(298.125 82.0 82.0)"><path d="M82.0 22.5 L79.2 27.5 L84.8 27.5 Z" fill="#fff"/></g><g transform="rotate(309.375 82.0 82.0)"><path d="M82.0 22.5 L79.2 27.5 L84.8 27.5 Z" fill="#fff"/></g><g transform="rotate(320.625 82.0 82.0)"><path d="M82.0 22.5 L79.2 27.5 L84.8 27.5 Z" fill="#fff"/></g><g transform="rotate(331.875 82.0 82.0)"><path d="M82.0 22.5 L79.2 27.5 L84.8 27.5 Z" fill="#fff"/></g><g transform="rotate(343.125 82.0 82.0)"><path d="M82.0 22.5 L79.2 27.5 L84.8 27.5 Z" fill="#fff"/></g><g transform="rotate(354.375 82.0 82.0)"><path d="M82.0 22.5 L79.2 27.5 L84.8 27.5 Z" fill="#fff"/></g><circle cx="82.0" cy="82.0" r="50.5" fill="none" stroke="#fff" stroke-width="1.3"/><g transform="rotate(0.000 82.0 82.0)"><path d="M82.0 82.0 C48.0 66.0 56.0 38.0 82.0 32.0 C108.0 38.0 116.0 66.0 82.0 82.0 Z" fill="none" stroke="#fff" stroke-width="1.1"/></g><g transform="rotate(72.000 82.0 82.0)"><path d="M82.0 82.0 C48.0 66.0 56.0 38.0 82.0 32.0 C108.0 38.0 116.0 66.0 82.0 82.0 Z" fill="none" stroke="#fff" stroke-width="1.1"/></g><g transform="rotate(144.000 82.0 82.0)"><path d="M82.0 82.0 C48.0 66.0 56.0 38.0 82.0 32.0 C108.0 38.0 116.0 66.0 82.0 82.0 Z" fill="none" stroke="#fff" stroke-width="1.1"/></g><g transform="rotate(216.000 82.0 82.0)"><path d="M82.0 82.0 C48.0 66.0 56.0 38.0 82.0 32.0 C108.0 38.0 116.0 66.0 82.0 82.0 Z" fill="none" stroke="#fff" stroke-width="1.1"/></g><g transform="rotate(288.000 82.0 82.0)"><path d="M82.0 82.0 C48.0 66.0 56.0 38.0 82.0 32.0 C108.0 38.0 116.0 66.0 82.0 82.0 Z" fill="none" stroke="#fff" stroke-width="1.1"/></g><g transform="rotate(0.000 82.0 82.0)"><path d="M82.0 70.0 C70.0 62.0 73.0 50.0 82.0 43.0 C91.0 50.0 94.0 62.0 82.0 70.0 Z" fill="none" stroke="#fff" stroke-width="3.2"/></g><g transform="rotate(72.000 82.0 82.0)"><path d="M82.0 70.0 C70.0 62.0 73.0 50.0 82.0 43.0 C91.0 50.0 94.0 62.0 82.0 70.0 Z" fill="none" stroke="#fff" stroke-width="3.2"/></g><g transform="rotate(144.000 82.0 82.0)"><path d="M82.0 70.0 C70.0 62.0 73.0 50.0 82.0 43.0 C91.0 50.0 94.0 62.0 82.0 70.0 Z" fill="none" stroke="#fff" stroke-width="3.2"/></g><g transform="rotate(216.000 82.0 82.0)"><path d="M82.0 70.0 C70.0 62.0 73.0 50.0 82.0 43.0 C91.0 50.0 94.0 62.0 82.0 70.0 Z" fill="none" stroke="#fff" stroke-width="3.2"/></g><g transform="rotate(288.000 82.0 82.0)"><path d="M82.0 70.0 C70.0 62.0 73.0 50.0 82.0 43.0 C91.0 50.0 94.0 62.0 82.0 70.0 Z" fill="none" stroke="#fff" stroke-width="3.2"/></g><g transform="rotate(0.000 82.0 82.0)"><path d="M82.0 81.0 C76.0 74.0 77.0 65.0 82.0 59.0 C87.0 65.0 88.0 74.0 82.0 81.0 Z" fill="#fff"/></g><g transform="rotate(72.000 82.0 82.0)"><path d="M82.0 81.0 C76.0 74.0 77.0 65.0 82.0 59.0 C87.0 65.0 88.0 74.0 82.0 81.0 Z" fill="#fff"/></g><g transform="rotate(144.000 82.0 82.0)"><path d="M82.0 81.0 C76.0 74.0 77.0 65.0 82.0 59.0 C87.0 65.0 88.0 74.0 82.0 81.0 Z" fill="#fff"/></g><g transform="rotate(216.000 82.0 82.0)"><path d="M82.0 81.0 C76.0 74.0 77.0 65.0 82.0 59.0 C87.0 65.0 88.0 74.0 82.0 81.0 Z" fill="#fff"/></g><g transform="rotate(288.000 82.0 82.0)"><path d="M82.0 81.0 C76.0 74.0 77.0 65.0 82.0 59.0 C87.0 65.0 88.0 74.0 82.0 81.0 Z" fill="#fff"/></g><g transform="rotate(36.000 82.0 82.0)"><path d="M82.0 70.0 L82.0 51.0" stroke="#fff" stroke-width="1.4"/></g><g transform="rotate(108.000 82.0 82.0)"><path d="M82.0 70.0 L82.0 51.0" stroke="#fff" stroke-width="1.4"/></g><g transform="rotate(180.000 82.0 82.0)"><path d="M82.0 70.0 L82.0 51.0" stroke="#fff" stroke-width="1.4"/></g><g transform="rotate(252.000 82.0 82.0)"><path d="M82.0 70.0 L82.0 51.0" stroke="#fff" stroke-width="1.4"/></g><g transform="rotate(324.000 82.0 82.0)"><path d="M82.0 70.0 L82.0 51.0" stroke="#fff" stroke-width="1.4"/></g><circle cx="82.0" cy="82.0" r="3" fill="#fff"/><g transform="rotate(36.000 82.0 82.0)"><path d="M82.0 52.0 C79.0 49.0 74.0 46.0 76.0 42.0 C78.0 39.0 82.0 41.0 82.0 44.0 C82.0 41.0 86.0 39.0 88.0 42.0 C90.0 46.0 85.0 49.0 82.0 52.0 Z" fill="none" stroke="#fff" stroke-width="0.9"/></g><g transform="rotate(108.000 82.0 82.0)"><path d="M82.0 52.0 C79.0 49.0 74.0 46.0 76.0 42.0 C78.0 39.0 82.0 41.0 82.0 44.0 C82.0 41.0 86.0 39.0 88.0 42.0 C90.0 46.0 85.0 49.0 82.0 52.0 Z" fill="none" stroke="#fff" stroke-width="0.9"/></g><g transform="rotate(180.000 82.0 82.0)"><path d="M82.0 52.0 C79.0 49.0 74.0 46.0 76.0 42.0 C78.0 39.0 82.0 41.0 82.0 44.0 C82.0 41.0 86.0 39.0 88.0 42.0 C90.0 46.0 85.0 49.0 82.0 52.0 Z" fill="none" stroke="#fff" stroke-width="0.9"/></g><g transform="rotate(252.000 82.0 82.0)"><path d="M82.0 52.0 C79.0 49.0 74.0 46.0 76.0 42.0 C78.0 39.0 82.0 41.0 82.0 44.0 C82.0 41.0 86.0 39.0 88.0 42.0 C90.0 46.0 85.0 49.0 82.0 52.0 Z" fill="none" stroke="#fff" stroke-width="0.9"/></g><g transform="rotate(324.000 82.0 82.0)"><path d="M82.0 52.0 C79.0 49.0 74.0 46.0 76.0 42.0 C78.0 39.0 82.0 41.0 82.0 44.0 C82.0 41.0 86.0 39.0 88.0 42.0 C90.0 46.0 85.0 49.0 82.0 52.0 Z" fill="none" stroke="#fff" stroke-width="0.9"/></g></svg>
<div class="a" style="left:1723.2px;top:506px;width:164px;height:164px;border:1px solid #5ea1fb"></div>
<svg class="a" style="left:1732.2px;top:501px" width="26" height="12" viewBox="0 0 26 12"><rect x="0" y="0" width="26" height="12" fill="#fff"/><rect x="2" y="2" width="12" height="8" rx="4" fill="none" stroke="#1b78e6" stroke-width="2.3"/><rect x="10" y="2" width="12" height="8" rx="4" fill="none" stroke="#1b78e6" stroke-width="2.3"/></svg>
<div class="a" style="left:1653.6px;top:700px;width:304px;height:116px;border:1px solid #5ea1fb"></div>
<div class="t" style="left:1653.6px;top:694.5px;width:304px;text-align:center;font-family:'Liberation Serif',serif;font-size:34px;line-height:42.3px;color:#111">Beispieltext<br>Element 4</div>
<div class="a" style="left:2013.4px;top:493px;width:338px;height:337px;border:2px solid #f41a1a;box-shadow:1px 1px 0 rgba(90,100,100,.5), 2px 2px 0 rgba(120,120,120,.15), inset 1px 1px 0 rgba(90,100,100,.4)"></div>
<svg class="a" style="left:2101.0px;top:506px" width="164" height="164" viewBox="0 0 164 164"><g transform="rotate(0.000 82.0 82.0)"><path d="M85.97 44.21 C89.24 30.51 94.16 13.06 79.45 9.04 C66.20 7.66 62.70 18.88 70.36 22.12" fill="none" stroke="#1fa38d" stroke-width="12" stroke-linecap="round"/></g><g transform="rotate(30.000 82.0 82.0)"><path d="M85.97 44.21 C89.24 30.51 94.16 13.06 79.45 9.04 C66.20 7.66 62.70 18.88 70.36 22.12" fill="none" stroke="#1fa38d" stroke-width="12" stroke-linecap="round"/></g><g transform="rotate(60.000 82.0 82.0)"><path d="M85.97 44.21 C89.24 30.51 94.16 13.06 79.45 9.04 C66.20 7.66 62.70 18.88 70.36 22.12" fill="none" stroke="#1fa38d" stroke-width="12" stroke-linecap="round"/></g><g transform="rotate(90.000 82.0 82.0)"><path d="M85.97 44.21 C89.24 30.51 94.16 13.06 79.45 9.04 C66.20 7.66 62.70 18.88 70.36 22.12" fill="none" stroke="#1fa38d" stroke-width="12" stroke-linecap="round"/></g><g transform="rotate(120.000 82.0 82.0)"><path d="M85.97 44.21 C89.24 30.51 94.16 13.06 79.45 9.04 C66.20 7.66 62.70 18.88 70.36 22.12" fill="none" stroke="#1fa38d" stroke-width="12" stroke-linecap="round"/></g><g transform="rotate(150.000 82.0 82.0)"><path d="M85.97 44.21 C89.24 30.51 94.16 13.06 79.45 9.04 C66.20 7.66 62.70 18.88 70.36 22.12" fill="none" stroke="#1fa38d" stroke-width="12" stroke-linecap="round"/></g><g transform="rotate(180.000 82.0 82.0)"><path d="M85.97 44.21 C89.24 30.51 94.16 13.06 79.45 9.04 C66.20 7.66 62.70 18.88 70.36 22.12" fill="none" stroke="#1fa38d" stroke-width="12" stroke-linecap="round"/></g><g transform="rotate(210.000 82.0 82.0)"><path d="M85.97 44.21 C89.24 30.51 94.16 13.06 79.45 9.04 C66.20 7.66 62.70 18.88 70.36 22.12" fill="none" stroke="#1fa38d" stroke-width="12" stroke-linecap="round"/></g><g transform="rotate(240.000 82.0 82.0)"><path d="M85.97 44.21 C89.24 30.51 94.16 13.06 79.45 9.04 C66.20 7.66 62.70 18.88 70.36 22.12" fill="none" stroke="#1fa38d" stroke-width="12" stroke-linecap="round"/></g><g transform="rotate(270.000 82.0 82.0)"><path d="M85.97 44.21 C89.24 30.51 94.16 13.06 79.45 9.04 C66.20 7.66 62.70 18.88 70.36 22.12" fill="none" stroke="#1fa38d" stroke-width="12" stroke-linecap="round"/></g><g transform="rotate(300.000 82.0 82.0)"><path d="M85.97 44.21 C89.24 30.51 94.16 13.06 79.45 9.04 C66.20 7.66 62.70 18.88 70.36 22.12" fill="none" stroke="#1fa38d" stroke-width="12" stroke-linecap="round"/></g><g transform="rotate(330.000 82.0 82.0)"><path d="M85.97 44.21 C89.24 30.51 94.16 13.06 79.45 9.04 C66.20 7.66 62.70 18.88 70.36 22.12" fill="none" stroke="#1fa38d" stroke-width="12" stroke-linecap="round"/></g><g transform="rotate(0.000 82.0 82.0)"><circle cx="72.95" cy="17.63" r="3.3" fill="none" stroke="#fff" stroke-width="2"/><path d="M79.91 22.04 L87.23 32.27 L85.91 26.14 Z" fill="#fff"/></g><g transform="rotate(30.000 82.0 82.0)"><circle cx="72.95" cy="17.63" r="3.3" fill="none" stroke="#fff" stroke-width="2"/><path d="M79.91 22.04 L87.23 32.27 L85.91 26.14 Z" fill="#fff"/></g><g transform="rotate(60.000 82.0 82.0)"><circle cx="72.95" cy="17.63" r="3.3" fill="none" stroke="#fff" stroke-width="2"/><path d="M79.91 22.04 L87.23 32.27 L85.91 26.14 Z" fill="#fff"/></g><g transform="rotate(90.000 82.0 82.0)"><circle cx="72.95" cy="17.63" r="3.3" fill="none" stroke="#fff" stroke-width="2"/><path d="M79.91 22.04 L87.23 32.27 L85.91 26.14 Z" fill="#fff"/></g><g transform="rotate(120.000 82.0 82.0)"><circle cx="72.95" cy="17.63" r="3.3" fill="none" stroke="#fff" stroke-width="2"/><path d="M79.91 22.04 L87.23 32.27 L85.91 26.14 Z" fill="#fff"/></g><g transform="rotate(150.000 82.0 82.0)"><circle cx="72.95" cy="17.63" r="3.3" fill="none" stroke="#fff" stroke-width="2"/><path d="M79.91 22.04 L87.23 32.27 L85.91 26.14 Z" fill="#fff"/></g><g transform="rotate(180.000 82.0 82.0)"><circle cx="72.95" cy="17.63" r="3.3" fill="none" stroke="#fff" stroke-width="2"/><path d="M79.91 22.04 L87.23 32.27 L85.91 26.14 Z" fill="#fff"/></g><g transform="rotate(210.000 82.0 82.0)"><circle cx="72.95" cy="17.63" r="3.3" fill="none" stroke="#fff" stroke-width="2"/><path d="M79.91 22.04 L87.23 32.27 L85.91 26.14 Z" fill="#fff"/></g><g transform="rotate(240.000 82.0 82.0)"><circle cx="72.95" cy="17.63" r="3.3" fill="none" stroke="#fff" stroke-width="2"/><path d="M79.91 22.04 L87.23 32.27 L85.91 26.14 Z" fill="#fff"/></g><g transform="rotate(270.000 82.0 82.0)"><circle cx="72.95" cy="17.63" r="3.3" fill="none" stroke="#fff" stroke-width="2"/><path d="M79.91 22.04 L87.23 32.27 L85.91 26.14 Z" fill="#fff"/></g><g transform="rotate(300.000 82.0 82.0)"><circle cx="72.95" cy="17.63" r="3.3" fill="none" stroke="#fff" stroke-width="2"/><path d="M79.91 22.04 L87.23 32.27 L85.91 26.14 Z" fill="#fff"/></g><g transform="rotate(330.000 82.0 82.0)"><circle cx="72.95" cy="17.63" r="3.3" fill="none" stroke="#fff" stroke-width="2"/><path d="M79.91 22.04 L87.23 32.27 L85.91 26.14 Z" fill="#fff"/></g><g transform="rotate(12.000 82.0 82.0)"><path d="M80.88 66.04 C68.85 55.04 61.66 36.32 69.32 22.33 C80.32 34.03 86.45 50.31 80.88 66.04 Z" fill="#ebebed" stroke="#1fa38d" stroke-width="1.6"/></g><g transform="rotate(42.000 82.0 82.0)"><path d="M80.88 66.04 C68.85 55.04 61.66 36.32 69.32 22.33 C80.32 34.03 86.45 50.31 80.88 66.04 Z" fill="#ebebed" stroke="#1fa38d" stroke-width="1.6"/></g><g transform="rotate(72.000 82.0 82.0)"><path d="M80.88 66.04 C68.85 55.04 61.66 36.32 69.32 22.33 C80.32 34.03 86.45 50.31 80.88 66.04 Z" fill="#ebebed" stroke="#1fa38d" stroke-width="1.6"/></g><g transform="rotate(102.000 82.0 82.0)"><path d="M80.88 66.04 C68.85 55.04 61.66 36.32 69.32 22.33 C80.32 34.03 86.45 50.31 80.88 66.04 Z" fill="#ebebed" stroke="#1fa38d" stroke-width="1.6"/></g><g transform="rotate(132.000 82.0 82.0)"><path d="M80.88 66.04 C68.85 55.04 61.66 36.32 69.32 22.33 C80.32 34.03 86.45 50.31 80.88 66.04 Z" fill="#ebebed" stroke="#1fa38d" stroke-width="1.6"/></g><g transform="rotate(162.000 82.0 82.0)"><path d="M80.88 66.04 C68.85 55.04 61.66 36.32 69.32 22.33 C80.32 34.03 86.45 50.31 80.88 66.04 Z" fill="#ebebed" stroke="#1fa38d" stroke-width="1.6"/></g><g transform="rotate(192.000 82.0 82.0)"><path d="M80.88 66.04 C68.85 55.04 61.66 36.32 69.32 22.33 C80.32 34.03 86.45 50.31 80.88 66.04 Z" fill="#ebebed" stroke="#1fa38d" stroke-width="1.6"/></g><g transform="rotate(222.000 82.0 82.0)"><path d="M80.88 66.04 C68.85 55.04 61.66 36.32 69.32 22.33 C80.32 34.03 86.45 50.31 80.88 66.04 Z" fill="#ebebed" stroke="#1fa38d" stroke-width="1.6"/></g><g transform="rotate(252.000 82.0 82.0)"><path d="M80.88 66.04 C68.85 55.04 61.66 36.32 69.32 22.33 C80.32 34.03 86.45 50.31 80.88 66.04 Z" fill="#ebebed" stroke="#1fa38d" stroke-width="1.6"/></g><g transform="rotate(282.000 82.0 82.0)"><path d="M80.88 66.04 C68.85 55.04 61.66 36.32 69.32 22.33 C80.32 34.03 86.45 50.31 80.88 66.04 Z" fill="#ebebed" stroke="#1fa38d" stroke-width="1.6"/></g><g transform="rotate(312.000 82.0 82.0)"><path d="M80.88 66.04 C68.85 55.04 61.66 36.32 69.32 22.33 C80.32 34.03 86.45 50.31 80.88 66.04 Z" fill="#ebebed" stroke="#1fa38d" stroke-width="1.6"/></g><g transform="rotate(342.000 82.0 82.0)"><path d="M80.88 66.04 C68.85 55.04 61.66 36.32 69.32 22.33 C80.32 34.03 86.45 50.31 80.88 66.04 Z" fill="#ebebed" stroke="#1fa38d" stroke-width="1.6"/></g><circle cx="82.0" cy="82.0" r="18" fill="#fff"/><circle cx="82.0" cy="82.0" r="9.5" fill="#1fa38d"/></svg>
<div class="a" style="left:2101.0px;top:506px;width:164px;height:164px;border:1px solid #5ea1fb"></div>
<svg class="a" style="left:2110.0px;top:501px" width="26" height="12" viewBox="0 0 26 12"><rect x="0" y="0" width="26" height="12" fill="#fff"/><rect x="2" y="2" width="12" height="8" rx="4" fill="none" stroke="#1b78e6" stroke-width="2.3"/><rect x="10" y="2" width="12" height="8" rx="4" fill="none" stroke="#1b78e6" stroke-width="2.3"/></svg>
<div class="a" style="left:2031.4px;top:700px;width:304px;height:116px;border:1px solid #5ea1fb"></div>
<div class="t" style="left:2031.4px;top:694.5px;width:304px;text-align:center;font-family:'Liberation Serif',serif;font-size:34px;line-height:42.3px;color:#111">Beispieltext<br>Element 5</div>
<div class="a" style="left:2391.2px;top:493px;width:338px;height:337px;border:2px solid #f41a1a;box-shadow:1px 1px 0 rgba(90,100,100,.5), 2px 2px 0 rgba(120,120,120,.15), inset 1px 1px 0 rgba(90,100,100,.4)"></div>
<svg class="a" style="left:2478.8px;top:506px" width="164" height="164" viewBox="0 0 164 164"><g transform="rotate(0.000 82.0 82.0)"><path d="M38.0 32.0 C26.0 24.0 32.0 10.0 46.0 12.0 C52.0 4.0 66.0 0.0 82.0 0.0 C98.0 0.0 112.0 4.0 120.0 12.0 C132.0 10.0 138.0 24.0 126.0 32.0 C116.0 36.0 100.0 40.0 82.0 52.0 C64.0 40.0 48.0 36.0 38.0 32.0 Z" fill="#dbd232"/></g><g transform="rotate(90.000 82.0 82.0)"><path d="M38.0 32.0 C26.0 24.0 32.0 10.0 46.0 12.0 C52.0 4.0 66.0 0.0 82.0 0.0 C98.0 0.0 112.0 4.0 120.0 12.0 C132.0 10.0 138.0 24.0 126.0 32.0 C116.0 36.0 100.0 40.0 82.0 52.0 C64.0 40.0 48.0 36.0 38.0 32.0 Z" fill="#dbd232"/></g><g transform="rotate(180.000 82.0 82.0)"><path d="M38.0 32.0 C26.0 24.0 32.0 10.0 46.0 12.0 C52.0 4.0 66.0 0.0 82.0 0.0 C98.0 0.0 112.0 4.0 120.0 12.0 C132.0 10.0 138.0 24.0 126.0 32.0 C116.0 36.0 100.0 40.0 82.0 52.0 C64.0 40.0 48.0 36.0 38.0 32.0 Z" fill="#dbd232"/></g><g transform="rotate(270.000 82.0 82.0)"><path d="M38.0 32.0 C26.0 24.0 32.0 10.0 46.0 12.0 C52.0 4.0 66.0 0.0 82.0 0.0 C98.0 0.0 112.0 4.0 120.0 12.0 C132.0 10.0 138.0 24.0 126.0 32.0 C116.0 36.0 100.0 40.0 82.0 52.0 C64.0 40.0 48.0 36.0 38.0 32.0 Z" fill="#dbd232"/></g><g transform="rotate(45.000 82.0 82.0)"><path d="M82.0 62.0 C58.0 56.0 52.0 30.0 68.0 18.0 C78.0 12.0 86.0 12.0 96.0 18.0 C112.0 30.0 106.0 56.0 82.0 62.0 Z" fill="#dbd232" stroke="#fff" stroke-width="1.3"/></g><g transform="rotate(135.000 82.0 82.0)"><path d="M82.0 62.0 C58.0 56.0 52.0 30.0 68.0 18.0 C78.0 12.0 86.0 12.0 96.0 18.0 C112.0 30.0 106.0 56.0 82.0 62.0 Z" fill="#dbd232" stroke="#fff" stroke-width="1.3"/></g><g transform="rotate(225.000 82.0 82.0)"><path d="M82.0 62.0 C58.0 56.0 52.0 30.0 68.0 18.0 C78.0 12.0 86.0 12.0 96.0 18.0 C112.0 30.0 106.0 56.0 82.0 62.0 Z" fill="#dbd232" stroke="#fff" stroke-width="1.3"/></g><g transform="rotate(315.000 82.0 82.0)"><path d="M82.0 62.0 C58.0 56.0 52.0 30.0 68.0 18.0 C78.0 12.0 86.0 12.0 96.0 18.0 C112.0 30.0 106.0 56.0 82.0 62.0 Z" fill="#dbd232" stroke="#fff" stroke-width="1.3"/></g><g transform="rotate(0.000 82.0 82.0)"><circle cx="65.0" cy="20.0" r="3.6" fill="#fff"/><circle cx="99.0" cy="20.0" r="3.6" fill="#fff"/><path d="M80.0 6.0 C74.0 16.0 75.0 28.0 79.0 34.0 M84.0 6.0 C90.0 16.0 89.0 28.0 85.0 34.0" fill="none" stroke="#fff" stroke-width="1.1"/><path d="M58.0 28.0 C60.0 14.0 72.0 12.0 74.0 22.0" fill="none" stroke="#fff" stroke-width="1"/><path d="M106.0 28.0 C104.0 14.0 92.0 12.0 90.0 22.0" fill="none" stroke="#fff" stroke-width="1"/></g><g transform="rotate(90.000 82.0 82.0)"><circle cx="65.0" cy="20.0" r="3.6" fill="#fff"/><circle cx="99.0" cy="20.0" r="3.6" fill="#fff"/><path d="M80.0 6.0 C74.0 16.0 75.0 28.0 79.0 34.0 M84.0 6.0 C90.0 16.0 89.0 28.0 85.0 34.0" fill="none" stroke="#fff" stroke-width="1.1"/><path d="M58.0 28.0 C60.0 14.0 72.0 12.0 74.0 22.0" fill="none" stroke="#fff" stroke-width="1"/><path d="M106.0 28.0 C104.0 14.0 92.0 12.0 90.0 22.0" fill="none" stroke="#fff" stroke-width="1"/></g><g transform="rotate(180.000 82.0 82.0)"><circle cx="65.0" cy="20.0" r="3.6" fill="#fff"/><circle cx="99.0" cy="20.0" r="3.6" fill="#fff"/><path d="M80.0 6.0 C74.0 16.0 75.0 28.0 79.0 34.0 M84.0 6.0 C90.0 16.0 89.0 28.0 85.0 34.0" fill="none" stroke="#fff" stroke-width="1.1"/><path d="M58.0 28.0 C60.0 14.0 72.0 12.0 74.0 22.0" fill="none" stroke="#fff" stroke-width="1"/><path d="M106.0 28.0 C104.0 14.0 92.0 12.0 90.0 22.0" fill="none" stroke="#fff" stroke-width="1"/></g><g transform="rotate(270.000 82.0 82.0)"><circle cx="65.0" cy="20.0" r="3.6" fill="#fff"/><circle cx="99.0" cy="20.0" r="3.6" fill="#fff"/><path d="M80.0 6.0 C74.0 16.0 75.0 28.0 79.0 34.0 M84.0 6.0 C90.0 16.0 89.0 28.0 85.0 34.0" fill="none" stroke="#fff" stroke-width="1.1"/><path d="M58.0 28.0 C60.0 14.0 72.0 12.0 74.0 22.0" fill="none" stroke="#fff" stroke-width="1"/><path d="M106.0 28.0 C104.0 14.0 92.0 12.0 90.0 22.0" fill="none" stroke="#fff" stroke-width="1"/></g><polygon points="82.00,48.00 89.65,63.52 106.04,57.96 100.48,74.35 116.00,82.00 100.48,89.65 106.04,106.04 89.65,100.48 82.00,116.00 74.35,100.48 57.96,106.04 63.52,89.65 48.00,82.00 63.52,74.35 57.96,57.96 74.35,63.52" fill="#fff"/><g transform="rotate(0.000 82.0 82.0)"><ellipse cx="71.0" cy="51.0" rx="6.2" ry="6.8" fill="#dbd232" stroke="#fff" stroke-width="1.2"/><ellipse cx="71.0" cy="51.0" rx="2.8" ry="3.6" fill="#fff"/></g><g transform="rotate(45.000 82.0 82.0)"><ellipse cx="71.0" cy="51.0" rx="6.2" ry="6.8" fill="#dbd232" stroke="#fff" stroke-width="1.2"/><ellipse cx="71.0" cy="51.0" rx="2.8" ry="3.6" fill="#fff"/></g><g transform="rotate(90.000 82.0 82.0)"><ellipse cx="71.0" cy="51.0" rx="6.2" ry="6.8" fill="#dbd232" stroke="#fff" stroke-width="1.2"/><ellipse cx="71.0" cy="51.0" rx="2.8" ry="3.6" fill="#fff"/></g><g transform="rotate(135.000 82.0 82.0)"><ellipse cx="71.0" cy="51.0" rx="6.2" ry="6.8" fill="#dbd232" stroke="#fff" stroke-width="1.2"/><ellipse cx="71.0" cy="51.0" rx="2.8" ry="3.6" fill="#fff"/></g><g transform="rotate(180.000 82.0 82.0)"><ellipse cx="71.0" cy="51.0" rx="6.2" ry="6.8" fill="#dbd232" stroke="#fff" stroke-width="1.2"/><ellipse cx="71.0" cy="51.0" rx="2.8" ry="3.6" fill="#fff"/></g><g transform="rotate(225.000 82.0 82.0)"><ellipse cx="71.0" cy="51.0" rx="6.2" ry="6.8" fill="#dbd232" stroke="#fff" stroke-width="1.2"/><ellipse cx="71.0" cy="51.0" rx="2.8" ry="3.6" fill="#fff"/></g><g transform="rotate(270.000 82.0 82.0)"><ellipse cx="71.0" cy="51.0" rx="6.2" ry="6.8" fill="#dbd232" stroke="#fff" stroke-width="1.2"/><ellipse cx="71.0" cy="51.0" rx="2.8" ry="3.6" fill="#fff"/></g><g transform="rotate(315.000 82.0 82.0)"><ellipse cx="71.0" cy="51.0" rx="6.2" ry="6.8" fill="#dbd232" stroke="#fff" stroke-width="1.2"/><ellipse cx="71.0" cy="51.0" rx="2.8" ry="3.6" fill="#fff"/></g><circle cx="82.00" cy="69.00" r="6" fill="#dbd232"/><circle cx="91.19" cy="72.81" r="6" fill="#dbd232"/><circle cx="95.00" cy="82.00" r="6" fill="#dbd232"/><circle cx="91.19" cy="91.19" r="6" fill="#dbd232"/><circle cx="82.00" cy="95.00" r="6" fill="#dbd232"/><circle cx="72.81" cy="91.19" r="6" fill="#dbd232"/><circle cx="69.00" cy="82.00" r="6" fill="#dbd232"/><circle cx="72.81" cy="72.81" r="6" fill="#dbd232"/><circle cx="82.0" cy="82.0" r="13" fill="#dbd232"/><circle cx="82.0" cy="82.0" r="8" fill="none" stroke="#fff" stroke-width="1.2"/></svg>
<div class="a" style="left:2478.8px;top:506px;width:164px;height:164px;border:1px solid #5ea1fb"></div>
<svg class="a" style="left:2487.8px;top:501px" width="26" height="12" viewBox="0 0 26 12"><rect x="0" y="0" width="26" height="12" fill="#fff"/><rect x="2" y="2" width="12" height="8" rx="4" fill="none" stroke="#1b78e6" stroke-width="2.3"/><rect x="10" y="2" width="12" height="8" rx="4" fill="none" stroke="#1b78e6" stroke-width="2.3"/></svg>
<div class="a" style="left:2409.2px;top:700px;width:304px;height:116px;border:1px solid #5ea1fb"></div>
<div class="t" style="left:2409.2px;top:694.5px;width:304px;text-align:center;font-family:'Liberation Serif',serif;font-size:34px;line-height:42.3px;color:#111">Beispieltext<br>Element 6</div>
<div class="a" style="left:502.2px;top:871px;width:338px;height:337px;border:2px solid #f41a1a;box-shadow:1px 1px 0 rgba(90,100,100,.5), 2px 2px 0 rgba(120,120,120,.15), inset 1px 1px 0 rgba(90,100,100,.4)"></div>
<svg class="a" style="left:589.8px;top:884px" width="165" height="165" viewBox="0 0 165 165"><rect x="0.5" y="0.5" width="164" height="164" fill="none" stroke="#5ea1fb" stroke-width="1.3"/><path d="M0.5 0.5 L164.5 164.5 M164.5 0.5 L0.5 164.5" stroke="#5ea1fb" stroke-width="1.1"/></svg>
<div class="a" style="left:520.2px;top:1078px;width:304px;height:116px;border:1px solid #5ea1fb"></div>
<div class="t" style="left:520.2px;top:1072.5px;width:304px;text-align:center;font-family:'Liberation Serif',serif;font-size:34px;line-height:42.3px;color:#111">Beispieltext<br>Element 7</div>
<div class="a" style="left:880.0px;top:871px;width:338px;height:337px;border:2px solid #f41a1a;box-shadow:1px 1px 0 rgba(90,100,100,.5), 2px 2px 0 rgba(120,120,120,.15), inset 1px 1px 0 rgba(90,100,100,.4)"></div>
<svg class="a" style="left:967.6px;top:884px" width="165" height="165" viewBox="0 0 165 165"><rect x="0.5" y="0.5" width="164" height="164" fill="none" stroke="#5ea1fb" stroke-width="1.3"/><path d="M0.5 0.5 L164.5 164.5 M164.5 0.5 L0.5 164.5" stroke="#5ea1fb" stroke-width="1.1"/></svg>
<div class="a" style="left:898.0px;top:1078px;width:304px;height:116px;border:1px solid #5ea1fb"></div>
<div class="t" style="left:898.0px;top:1072.5px;width:304px;text-align:center;font-family:'Liberation Serif',serif;font-size:34px;line-height:42.3px;color:#111">Beispieltext<br>Element 8</div>
<div class="a" style="left:1257.8px;top:871px;width:338px;height:337px;border:2px solid #f41a1a;box-shadow:1px 1px 0 rgba(90,100,100,.5), 2px 2px 0 rgba(120,120,120,.15), inset 1px 1px 0 rgba(90,100,100,.4)"></div>
<svg class="a" style="left:1345.4px;top:884px" width="165" height="165" viewBox="0 0 165 165"><rect x="0.5" y="0.5" width="164" height="164" fill="none" stroke="#5ea1fb" stroke-width="1.3"/><path d="M0.5 0.5 L164.5 164.5 M164.5 0.5 L0.5 164.5" stroke="#5ea1fb" stroke-width="1.1"/></svg>
<div class="a" style="left:1275.8px;top:1078px;width:304px;height:116px;border:1px solid #5ea1fb"></div>
<div class="t" style="left:1275.8px;top:1072.5px;width:304px;text-align:center;font-family:'Liberation Serif',serif;font-size:34px;line-height:42.3px;color:#111">Beispieltext<br>Element 9</div>
<div class="a" style="left:1635.6px;top:871px;width:338px;height:337px;border:2px solid #f41a1a;box-shadow:1px 1px 0 rgba(90,100,100,.5), 2px 2px 0 rgba(120,120,120,.15), inset 1px 1px 0 rgba(90,100,100,.4)"></div>
<svg class="a" style="left:1723.2px;top:884px" width="165" height="165" viewBox="0 0 165 165"><rect x="0.5" y="0.5" width="164" height="164" fill="none" stroke="#5ea1fb" stroke-width="1.3"/><path d="M0.5 0.5 L164.5 164.5 M164.5 0.5 L0.5 164.5" stroke="#5ea1fb" stroke-width="1.1"/></svg>
<div class="a" style="left:1653.6px;top:1078px;width:304px;height:116px;border:1px solid #5ea1fb"></div>
<div class="t" style="left:1653.6px;top:1072.5px;width:304px;text-align:center;font-family:'Liberation Serif',serif;font-size:34px;line-height:42.3px;color:#111">Beispieltext<br>Element 10</div>
<div class="a" style="left:2013.4px;top:871px;width:338px;height:337px;border:2px solid #f41a1a;box-shadow:1px 1px 0 rgba(90,100,100,.5), 2px 2px 0 rgba(120,120,120,.15), inset 1px 1px 0 rgba(90,100,100,.4)"></div>
<svg class="a" style="left:2101.0px;top:884px" width="165" height="165" viewBox="0 0 165 165"><rect x="0.5" y="0.5" width="164" height="164" fill="none" stroke="#5ea1fb" stroke-width="1.3"/><path d="M0.5 0.5 L164.5 164.5 M164.5 0.5 L0.5 164.5" stroke="#5ea1fb" stroke-width="1.1"/></svg>
<div class="a" style="left:2031.4px;top:1078px;width:304px;height:116px;border:1px solid #5ea1fb"></div>
<div class="t" style="left:2031.4px;top:1072.5px;width:304px;text-align:center;font-family:'Liberation Serif',serif;font-size:34px;line-height:42.3px;color:#111">Beispieltext<br>Element 11</div>
<div class="a" style="left:2391.2px;top:871px;width:338px;height:337px;border:2px solid #f41a1a;box-shadow:1px 1px 0 rgba(90,100,100,.5), 2px 2px 0 rgba(120,120,120,.15), inset 1px 1px 0 rgba(90,100,100,.4)"></div>
<svg class="a" style="left:2478.8px;top:884px" width="165" height="165" viewBox="0 0 165 165"><rect x="0.5" y="0.5" width="164" height="164" fill="none" stroke="#5ea1fb" stroke-width="1.3"/><path d="M0.5 0.5 L164.5 164.5 M164.5 0.5 L0.5 164.5" stroke="#5ea1fb" stroke-width="1.1"/></svg>
<div class="a" style="left:2409.2px;top:1078px;width:304px;height:116px;border:1px solid #5ea1fb"></div>
<div class="t" style="left:2409.2px;top:1072.5px;width:304px;text-align:center;font-family:'Liberation Serif',serif;font-size:34px;line-height:42.3px;color:#111">Beispieltext<br>Element 12</div>
<svg class="a" style="left:104px;top:153px" width="16" height="20" viewBox="0 0 16 20"><path d="M11 1 L4 9 H12 L5 18" fill="none" stroke="#a8a8a8" stroke-width="1.6"/><path d="M3 13 V19 H9" fill="none" stroke="#a8a8a8" stroke-width="1.6"/></svg>
<svg class="a" style="left:148px;top:156px" width="15" height="15" viewBox="0 0 15 15"><circle cx="7.5" cy="7.5" r="6.5" fill="#9a9a9a"/></svg>
<svg class="a" style="left:191px;top:154px" width="19" height="20" viewBox="0 0 19 20"><rect x="1" y="1.5" width="16" height="17" fill="none" stroke="#9a9a9a" stroke-width="1.5"/><path d="M9 5 V15 M4 10 H14" stroke="#9a9a9a" stroke-width="1.5"/></svg>
<svg class="a" style="left:234px;top:153px" width="19" height="21" viewBox="0 0 19 21"><path d="M1 4 H18 M6 4 V1.5 H13 V4" fill="none" stroke="#9a9a9a" stroke-width="1.5"/><rect x="3" y="5" width="13" height="15" fill="none" stroke="#9a9a9a" stroke-width="1.5"/><path d="M6.5 8 V17 M9.5 8 V17 M12.5 8 V17" stroke="#9a9a9a" stroke-width="1.4"/></svg>
<svg class="a" style="left:294px;top:156px" width="20" height="13" viewBox="0 0 20 13"><path d="M0 1.2 H19 M0 6.5 H19 M0 11.8 H19" stroke="#dedede" stroke-width="1.6"/></svg>
<svg class="a" style="left:33px;top:191px" width="25" height="25" viewBox="0 0 25 25"><rect x="0.8" y="0.8" width="23" height="23" fill="none" stroke="#555" stroke-width="1.4"/><path d="M12.5 5 V9 M12.5 15 V19 M5 12.5 H9 M15.5 12.5 H19.5 M7.5 7.5 L9.5 9.5 M17.5 7.5 L15.5 9.5 M7.5 17.5 L9.5 15.5 M17.5 17.5 L15.5 15.5" stroke="#555" stroke-width="1.4"/></svg>
<svg class="a" style="left:33px;top:224px" width="25" height="25" viewBox="0 0 25 25"><rect x="0.8" y="0.8" width="23" height="23" fill="none" stroke="#555" stroke-width="1.4"/><path d="M9.5 8.5 L5.5 12.5 L9.5 16.5 M15.5 8.5 L19.5 12.5 L15.5 16.5" fill="none" stroke="#444" stroke-width="1.8"/></svg>
<svg class="a" style="left:13px;top:230px" width="9" height="14" viewBox="0 0 9 14"><path d="M1.5 1.5 L6.5 7 L1.5 12.5" fill="none" stroke="#666" stroke-width="1.6"/></svg>
<div class="a" style="left:105px;top:282px;width:113px;height:714px;background:#535353;border:1px solid #353535;border-radius:7px 7px 0 0;box-shadow:0 0 6px rgba(0,0,0,.35)"></div>
<div class="a" style="left:106px;top:283px;width:111px;height:21px;background:#434343;border-radius:6px 6px 0 0;border-bottom:1px solid #333"></div>
<div class="a" style="left:186px;top:283px;width:1px;height:21px;background:#333"></div>
<svg class="a" style="left:114px;top:290px" width="10" height="10" viewBox="0 0 10 10"><path d="M1 1 L9 9 M9 1 L1 9" stroke="#b8b8b8" stroke-width="1.8"/></svg>
<svg class="a" style="left:195px;top:290px" width="12" height="9" viewBox="0 0 12 9"><path d="M5 0.5 L1 4.5 L5 8.5 M11 0.5 L7 4.5 L11 8.5" fill="none" stroke="#b8b8b8" stroke-width="1.5"/></svg>
<svg class="a" style="left:146px;top:309px" width="31" height="7" viewBox="0 0 31 7"><rect x="0.0" y="0" width="1.4" height="6" fill="#2e2e2e"/><rect x="3.1" y="0" width="1.4" height="6" fill="#2e2e2e"/><rect x="6.2" y="0" width="1.4" height="6" fill="#2e2e2e"/><rect x="9.3" y="0" width="1.4" height="6" fill="#2e2e2e"/><rect x="12.4" y="0" width="1.4" height="6" fill="#2e2e2e"/><rect x="15.5" y="0" width="1.4" height="6" fill="#2e2e2e"/><rect x="18.6" y="0" width="1.4" height="6" fill="#2e2e2e"/><rect x="21.7" y="0" width="1.4" height="6" fill="#2e2e2e"/><rect x="24.8" y="0" width="1.4" height="6" fill="#2e2e2e"/><rect x="27.9" y="0" width="1.4" height="6" fill="#2e2e2e"/></svg>
<div class="a" style="left:111px;top:443px;width:101px;height:1px;background:#474747"></div>
<div class="a" style="left:111px;top:562px;width:101px;height:1px;background:#474747"></div>
<div class="a" style="left:111px;top:643px;width:101px;height:1px;background:#474747"></div>
<div class="a" style="left:111px;top:724px;width:101px;height:1px;background:#474747"></div>
<div class="a" style="left:116px;top:328px;width:44px;height:35px;background:#313131;border-radius:4px"></div>
<svg class="a" style="left:129px;top:332px" width="22" height="29" viewBox="0 0 22 29"><path d="M2 2 L19 18.5 H11.5 L2 27 Z" fill="none" stroke="#c8c8c8" stroke-width="1.8" stroke-linejoin="miter"/></svg>
<svg class="a" style="left:177px;top:332px" width="22" height="29" viewBox="0 0 22 29"><path d="M1 1 L20 19 H12 L1 28 Z" fill="#c8c8c8"/></svg>
<svg class="a" style="left:127px;top:370px" width="24" height="26" viewBox="0 0 24 26"><path d="M16 12 V6 L11 1 H2 V24 H11" fill="none" stroke="#c8c8c8" stroke-width="1.7"/><path d="M11 1 V6 H16" fill="none" stroke="#c8c8c8" stroke-width="1.4"/><path d="M12 11 L22 18 L12 24 Z" fill="#c8c8c8"/></svg>
<svg class="a" style="left:173px;top:371px" width="28" height="25" viewBox="0 0 28 25"><path d="M2 1 V24 M26 1 V24" stroke="#c8c8c8" stroke-width="2.2"/><path d="M6 12.5 H22" stroke="#c8c8c8" stroke-width="2"/><path d="M5 12.5 L10 8 V17 Z M23 12.5 L18 8 V17 Z" fill="#c8c8c8"/></svg>
<svg class="a" style="left:126px;top:407px" width="24" height="26" viewBox="0 0 24 26"><path d="M1.5 11 V24 H22.5 V11" fill="none" stroke="#c8c8c8" stroke-width="2"/><rect x="6" y="15" width="3" height="3" fill="#c8c8c8"/><rect x="11" y="15" width="3" height="3" fill="#c8c8c8"/><rect x="16" y="15" width="3" height="3" fill="#c8c8c8"/><rect x="6" y="19.5" width="3" height="3" fill="#c8c8c8"/><rect x="11" y="19.5" width="3" height="3" fill="#c8c8c8"/><rect x="16" y="19.5" width="3" height="3" fill="#c8c8c8"/><path d="M7 2 L13 8 M13 3.5 V8 H8.5" fill="none" stroke="#c8c8c8" stroke-width="2"/></svg>
<svg class="a" style="left:174px;top:407px" width="24" height="26" viewBox="0 0 24 26"><path d="M1.5 11 V24 H22.5 V11" fill="none" stroke="#c8c8c8" stroke-width="2"/><rect x="6" y="15" width="3" height="3" fill="#c8c8c8"/><rect x="11" y="15" width="3" height="3" fill="#c8c8c8"/><rect x="16" y="15" width="3" height="3" fill="#c8c8c8"/><rect x="6" y="19.5" width="3" height="3" fill="#c8c8c8"/><rect x="11" y="19.5" width="3" height="3" fill="#c8c8c8"/><rect x="16" y="19.5" width="3" height="3" fill="#c8c8c8"/><path d="M11 9 L18 2 M13 2 H18 V7" fill="none" stroke="#c8c8c8" stroke-width="2"/></svg>
<svg class="a" style="left:126px;top:452px" width="24" height="24" viewBox="0 0 24 24"><path d="M1 1 H23 V7 H21 L20 4 H14 V20 L17 21 V23 H7 V21 L10 20 V4 H4 L3 7 H1 Z" fill="#c8c8c8"/></svg>
<svg class="a" style="left:153px;top:476px" width="10" height="10" viewBox="0 0 10 10"><path d="M8 4 L4 8 H8 Z" fill="#c8c8c8"/></svg>
<svg class="a" style="left:172px;top:451px" width="24" height="26" viewBox="0 0 24 26"><path d="M2 24 L23 2" stroke="#c8c8c8" stroke-width="2"/></svg>
<svg class="a" style="left:121px;top:488px" width="34" height="28" viewBox="0 0 34 28"><path d="M2 7 H10 M6 3 V11" stroke="#c8c8c8" stroke-width="2.2"/><path d="M9 26 L12 16 L20 9 L26 15 L19 23 Z" fill="#c8c8c8"/><path d="M21 8 L24 5 L29 10 L26 13 Z" fill="#c8c8c8"/><path d="M9 26 L16 19" stroke="#535353" stroke-width="1.3"/><path d="M30 22 L26 26 H30 Z" fill="#c8c8c8"/></svg>
<svg class="a" style="left:170px;top:488px" width="32" height="28" viewBox="0 0 32 28"><path d="M4 25 L6 18 L20 4 L25 9 L11 23 Z" fill="#c8c8c8"/><path d="M6 18 L11 23" stroke="#535353" stroke-width="1.2"/><path d="M28 22 L24 26 H28 Z" fill="#c8c8c8"/></svg>
<svg class="a" style="left:123px;top:526px" width="33" height="28" viewBox="0 0 33 28"><rect x="1" y="1" width="25" height="23" fill="none" stroke="#c8c8c8" stroke-width="2"/><path d="M1 1 L26 24 M26 1 L1 24" stroke="#c8c8c8" stroke-width="1.8"/><path d="M32 23 L28 27 H32 Z" fill="#c8c8c8"/></svg>
<svg class="a" style="left:171px;top:526px" width="32" height="28" viewBox="0 0 32 28"><rect x="1" y="1" width="25" height="23" fill="#6a6a6a" stroke="#c8c8c8" stroke-width="2"/><path d="M31 23 L27 27 H31 Z" fill="#c8c8c8"/></svg>
<svg class="a" style="left:123px;top:568px" width="28" height="28" viewBox="0 0 28 28"><circle cx="23" cy="5.5" r="4.2" fill="none" stroke="#c8c8c8" stroke-width="2"/><circle cx="23" cy="22" r="4.2" fill="none" stroke="#c8c8c8" stroke-width="2"/><path d="M1 7 L19 19 M1 20 L19 8" stroke="#c8c8c8" stroke-width="2.2"/></svg>
<svg class="a" style="left:171px;top:567px" width="32" height="30" viewBox="0 0 32 30"><path d="M5 8 A11 11 0 1 1 12 26" fill="none" stroke="#c8c8c8" stroke-width="2" stroke-dasharray="2.4 1.8"/><path d="M5 11 A11 11 0 0 1 20 4" fill="none" stroke="#c8c8c8" stroke-width="2.2"/><path d="M1 4 L8 3 L5 11 Z" fill="#c8c8c8"/><path d="M31 25 L27 29 H31 Z" fill="#c8c8c8"/></svg>
<svg class="a" style="left:124px;top:609px" width="27" height="24" viewBox="0 0 27 24"><defs><linearGradient id="gr1" x1="0" x2="1"><stop offset="0" stop-color="#d8d8d8"/><stop offset="1" stop-color="#555"/></linearGradient></defs><rect x="1" y="1" width="25" height="22" fill="url(#gr1)" stroke="#cfcfcf" stroke-width="1.5"/></svg>
<svg class="a" style="left:172px;top:609px" width="27" height="24" viewBox="0 0 27 24"><defs><linearGradient id="gr2" x1="0" y1="0" x2="0" y2="1"><stop offset="0" stop-color="#555"/><stop offset="1" stop-color="#dcdcdc"/></linearGradient><pattern id="chk" width="6" height="6" patternUnits="userSpaceOnUse"><rect width="3" height="3" fill="#777"/><rect x="3" y="3" width="3" height="3" fill="#777"/></pattern></defs><rect x="1" y="1" width="25" height="22" fill="url(#gr2)" stroke="#cfcfcf" stroke-width="1.5"/><rect x="2" y="2" width="23" height="9" fill="url(#chk)" opacity="0.6"/></svg>
<svg class="a" style="left:126px;top:651px" width="24" height="26" viewBox="0 0 24 26"><path d="M1 1 H22 V17 L17 23 H1 Z" fill="#c8c8c8"/><path d="M5 6 H18 M5 10 H18 M5 14 H13" stroke="#535353" stroke-width="1.8"/><path d="M17 23 V17 H22 Z" fill="#535353"/><path d="M18 22 L22 18 V22 Z" fill="#c8c8c8"/></svg>
<svg class="a" style="left:170px;top:649px" width="32" height="30" viewBox="0 0 32 30"><path d="M3 27 L4 22 L17 9 L21 13 L8 26 Z" fill="none" stroke="#c8c8c8" stroke-width="2"/><path d="M16 8 L21 3 Q24 1 26 3 Q28 5 26 8 L21 13 Z" fill="#c8c8c8"/><path d="M14 7 L23 16" stroke="#c8c8c8" stroke-width="2.4"/><path d="M31 25 L27 29 H31 Z" fill="#c8c8c8"/></svg>
<svg class="a" style="left:124px;top:688px" width="28" height="30" viewBox="0 0 28 30"><path d="M7 28 Q2 22 1 16 Q1 13 4 14 L7 18 V6 Q7 4 9 4 Q11 4 11 6 V14 V3 Q11 1 13 1 Q15 1 15 3 V14 V4 Q15 2 17 2 Q19 2 19 4 V15 V7 Q19 5 21 5 Q23 5 23 7 V19 Q23 25 19 28 Z" fill="#c8c8c8"/></svg>
<svg class="a" style="left:171px;top:687px" width="30" height="30" viewBox="0 0 30 30"><circle cx="12" cy="12" r="9.5" fill="none" stroke="#c8c8c8" stroke-width="2.4"/><path d="M19 19 L28 28" stroke="#c8c8c8" stroke-width="3.2" stroke-linecap="round"/></svg>
<div class="a" style="left:150px;top:760px;width:53px;height:53px;background:#000"></div>
<div class="a" style="left:165px;top:775px;width:23px;height:23px;background:#535353"></div>
<svg class="a" style="left:120px;top:730px" width="56" height="56" viewBox="0 0 56 56"><rect x="0" y="0" width="56" height="56" fill="#fff" stroke="#9a9a9a" stroke-width="1"/><path d="M2 54 L54 2" stroke="#f01010" stroke-width="3"/></svg>
<svg class="a" style="left:190px;top:733px" width="19" height="20" viewBox="0 0 19 20"><path d="M4 4 H10 Q15 4 15 9 V14" fill="none" stroke="#c8c8c8" stroke-width="1.8"/><path d="M1 4 L6 0.5 V7.5 Z M15 18.5 L11.5 13 H18.5 Z" fill="#c8c8c8"/></svg>
<svg class="a" style="left:120px;top:795px" width="20" height="20" viewBox="0 0 20 20"><rect x="6.5" y="6.5" width="12" height="12" fill="#111" stroke="#aaa" stroke-width="1"/><rect x="9.5" y="9.5" width="6" height="6" fill="#535353"/><rect x="1.5" y="1.5" width="12" height="12" fill="#fff" stroke="#aaa" stroke-width="1"/><path d="M2 13 L13 2" stroke="#f01010" stroke-width="1.6"/></svg>
<div class="a" style="left:129px;top:829px;width:28px;height:25px;background:#313131;border-radius:4px"></div>
<svg class="a" style="left:134px;top:833px" width="18" height="17" viewBox="0 0 18 17"><rect x="2" y="2" width="13" height="13" fill="none" stroke="#c8c8c8" stroke-width="2"/></svg>
<svg class="a" style="left:171px;top:833px" width="17" height="17" viewBox="0 0 17 17"><path d="M0.5 0.5 H16.5 V5 H15 L14.3 2.8 H10 V14.5 L12 15.3 V16.5 H5 V15.3 L7 14.5 V2.8 H2.7 L2 5 H0.5 Z" fill="#c8c8c8"/></svg>
<div class="a" style="left:120px;top:870px;width:20px;height:20px;background:#000;border:1px solid #999"></div>
<svg class="a" style="left:152px;top:870px" width="20" height="20" viewBox="0 0 20 20"><defs><linearGradient id="gr3" x1="0" x2="1"><stop offset="0" stop-color="#fff"/><stop offset="1" stop-color="#222"/></linearGradient></defs><rect x="0.5" y="0.5" width="19" height="19" fill="url(#gr3)" stroke="#999"/></svg>
<div class="a" style="left:179px;top:865px;width:29px;height:29px;background:#313131;border-radius:5px"></div>
<svg class="a" style="left:183px;top:869px" width="21" height="21" viewBox="0 0 21 21"><rect x="0.5" y="0.5" width="20" height="20" fill="#fff" stroke="#999"/><path d="M1 20 L20 1" stroke="#f01010" stroke-width="2.4"/></svg>
<svg class="a" style="left:127px;top:912px" width="32" height="26" viewBox="0 0 32 26"><rect x="9" y="7" width="15" height="12" fill="#c8c8c8"/><path d="M1 9 H6 M1 14 H6 M1 19 H6 M12 1 V4 M17 1 V4 M22 1 V4" stroke="#c8c8c8" stroke-width="1.6"/><path d="M31 22 L27 26 H31 Z" fill="#c8c8c8"/></svg>
<div class="a" style="left:116px;top:952px;width:44px;height:34px;background:#313131;border-radius:5px"></div>
<svg class="a" style="left:128px;top:959px" width="20" height="20" viewBox="0 0 20 20"><rect x="1" y="1" width="18" height="18" fill="none" stroke="#c8c8c8" stroke-width="1.8"/><rect x="5" y="6" width="7" height="6" fill="none" stroke="#c8c8c8" stroke-width="1.4"/><rect x="8" y="9" width="7" height="6" fill="none" stroke="#c8c8c8" stroke-width="1.4"/></svg>
<svg class="a" style="left:175px;top:957px" width="30" height="24" viewBox="0 0 30 24"><rect x="1" y="1" width="23" height="21" fill="#6a6a6a" stroke="#c8c8c8" stroke-width="1.8"/><path d="M1 6 H24" stroke="#c8c8c8" stroke-width="1.8"/><path d="M29 20 L25 24 H29 Z" fill="#c8c8c8"/></svg>
</body></html>
